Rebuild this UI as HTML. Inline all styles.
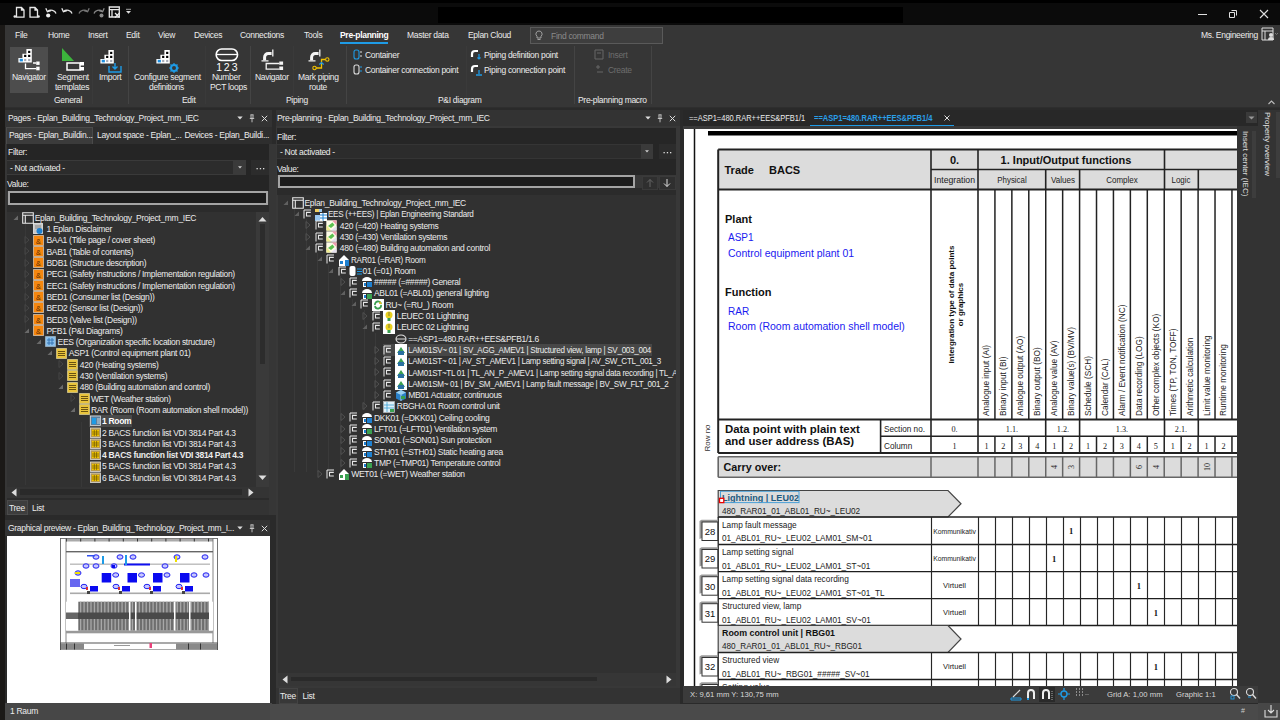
<!DOCTYPE html><html><head><meta charset="utf-8"><style>
*{margin:0;padding:0;box-sizing:border-box}
html,body{width:1280px;height:720px;overflow:hidden;background:#2f2f2f;font-family:"Liberation Sans",sans-serif}
.a{position:absolute}
.t{white-space:pre;line-height:1.2}
</style></head><body>
<div class="a" style="left:0px;top:0px;width:1280px;height:25px;background:#0b0b0b;"></div>
<div class="a" style="left:0px;top:0px;width:1280px;height:3px;background:#000000;"></div>
<div class="a" style="left:438px;top:7px;width:465px;height:16px;background:#000000;"></div>
<div class="a" style="left:0px;top:25px;width:5px;height:695px;background:#1b1917;"></div>
<div class="a" style="left:5px;top:25px;width:1275px;height:83px;background:#363636;"></div>
<div class="a" style="left:5px;top:106.6px;width:1275px;height:1.6px;background:#2e2e2e;"></div>
<div class="a" style="left:5px;top:108.2px;width:1275px;height:2px;background:#3c3c3c;"></div>
<div class="a" style="left:5px;top:108px;width:1275px;height:612px;background:#2a2a2a;"></div>
<svg class="a" style="left:13px;top:5px;" width="14" height="14" viewBox="0 0 14 14"><path d="M3.5 2.5h5l2.5 2.5v7.2H3.5z M8.5 2.5v2.5h2.5" fill="none" stroke="#e8e8e8" stroke-width="1.3"/><path d="M1.5 11.5h2" fill="none" stroke="#e8e8e8" stroke-width="1.3"/><circle cx="1.8" cy="11.5" r="1.3" fill="#e8e8e8"/></svg>
<svg class="a" style="left:28px;top:5px;" width="14" height="14" viewBox="0 0 14 14"><path d="M2 2.5h5l2.5 2.5v7.2H2z M7 2.5v2.5h2.5" fill="none" stroke="#e8e8e8" stroke-width="1.3"/><circle cx="10.5" cy="11.5" r="1.3" fill="#e8e8e8"/></svg>
<svg class="a" style="left:44px;top:5px;" width="14" height="14" viewBox="0 0 14 14"><path d="M3.5 6.5a5 4.2 0 0 1 8.5 2" fill="none" stroke="#e8e8e8" stroke-width="1.3"/><path d="M1.8 3.2l1.6 3.6 3.6-1.2" fill="none" stroke="#e8e8e8" stroke-width="1.3"/><circle cx="4.2" cy="10.5" r="2.1" fill="#f2f2f2"/></svg>
<svg class="a" style="left:60px;top:5px;" width="14" height="14" viewBox="0 0 14 14"><path d="M3.5 6.5a5 4.2 0 0 1 8.5 2" fill="none" stroke="#e8e8e8" stroke-width="1.3"/><path d="M1.8 3.2l1.6 3.6 3.6-1.2" fill="none" stroke="#e8e8e8" stroke-width="1.3"/></svg>
<svg class="a" style="left:77px;top:5px;" width="14" height="14" viewBox="0 0 14 14"><path d="M10.5 6.5a5 4.2 0 0 0-8.5 2" fill="none" stroke="#777" stroke-width="1.3"/><path d="M12.2 3.2l-1.6 3.6-3.6-1.2" fill="none" stroke="#777" stroke-width="1.3"/></svg>
<svg class="a" style="left:92px;top:5px;" width="14" height="14" viewBox="0 0 14 14"><path d="M10.5 6.5a5 4.2 0 0 0-8.5 2" fill="none" stroke="#888" stroke-width="1.3"/><path d="M12.2 3.2l-1.6 3.6-3.6-1.2" fill="none" stroke="#888" stroke-width="1.3"/><circle cx="9.5" cy="10.5" r="2" fill="#8a8a8a"/></svg>
<svg class="a" style="left:108px;top:5px;" width="14" height="14" viewBox="0 0 14 14"><path d="M1.3 2h10v10H1.3z M1.3 4.6h10 M4 4.6v7.4" fill="none" stroke="#e8e8e8" stroke-width="1.3"/><path d="M7 8l4.5 4.5 M11.5 8L7 12.5" fill="none" stroke="#e8e8e8" stroke-width="1.3"/></svg>
<svg class="a" style="left:125px;top:8px;" width="7" height="7" viewBox="0 0 7 7"><path d="M1 1.3h5" stroke="#ccc" stroke-width="0.8"/><path d="M1 3h5l-2.5 2.8z" fill="#ddd"/></svg>
<div class="a" style="left:1198px;top:14px;width:9px;height:1px;background:#e0e0e0;"></div>
<svg class="a" style="left:1228px;top:9px;" width="10" height="10" viewBox="0 0 10 10"><path d="M1.5 3.5h5v5h-5z M3.5 1.5h5v5" fill="none" stroke="#e0e0e0" stroke-width="1"/></svg>
<svg class="a" style="left:1259px;top:9px;" width="10" height="10" viewBox="0 0 10 10"><path d="M1 1l8 8 M9 1l-8 8" stroke="#e0e0e0" stroke-width="1.1"/></svg>
<div class="a t" style="left:15px;top:30.32px;font-size:8.5px;letter-spacing:-0.3px;color:#ececec;">File</div>
<div class="a t" style="left:48px;top:30.32px;font-size:8.5px;letter-spacing:-0.3px;color:#ececec;">Home</div>
<div class="a t" style="left:88px;top:30.32px;font-size:8.5px;letter-spacing:-0.3px;color:#ececec;">Insert</div>
<div class="a t" style="left:126px;top:30.32px;font-size:8.5px;letter-spacing:-0.3px;color:#ececec;">Edit</div>
<div class="a t" style="left:158px;top:30.32px;font-size:8.5px;letter-spacing:-0.3px;color:#ececec;">View</div>
<div class="a t" style="left:194px;top:30.32px;font-size:8.5px;letter-spacing:-0.3px;color:#ececec;">Devices</div>
<div class="a t" style="left:240px;top:30.32px;font-size:8.5px;letter-spacing:-0.3px;color:#ececec;">Connections</div>
<div class="a t" style="left:304px;top:30.32px;font-size:8.5px;letter-spacing:-0.3px;color:#ececec;">Tools</div>
<div class="a t" style="left:407px;top:30.32px;font-size:8.5px;letter-spacing:-0.3px;color:#ececec;">Master data</div>
<div class="a t" style="left:468px;top:30.32px;font-size:8.5px;letter-spacing:-0.3px;color:#ececec;">Eplan Cloud</div>
<div class="a t" style="left:340px;top:30.32px;font-size:8.5px;letter-spacing:-0.3px;color:#ffffff;"><b>Pre-planning</b></div>
<div class="a" style="left:340px;top:42px;width:48px;height:2px;background:#1e9be6;"></div>
<div class="a" style="left:530px;top:27px;width:133px;height:17px;background:#3e3e3e;border:1px solid #5a5a5a;"></div>
<svg class="a" style="left:534px;top:29px;" width="10" height="13" viewBox="0 0 10 13"><path d="M5 2a3 3 0 0 1 2 5.3V9H3V7.3A3 3 0 0 1 5 2z M3.5 10.5h3" fill="none" stroke="#aaa" stroke-width="0.9"/></svg>
<div class="a t" style="left:551px;top:30.82px;font-size:8.5px;letter-spacing:-0.3px;color:#8a8a8a;">Find command</div>
<div class="a t" style="left:1201px;top:30.32px;font-size:8.5px;letter-spacing:-0.3px;color:#ececec;">Ms. Engineering</div>
<svg class="a" style="left:1261px;top:27px;" width="18" height="15" viewBox="0 0 18 15"><path d="M1 1h11v12H1z M1 4h11 M4 4v9" fill="none" stroke="#ddd" stroke-width="1"/><circle cx="10" cy="8" r="2" fill="#ddd"/><path d="M7 13a3 3 0 0 1 6 0z" fill="#ddd"/><path d="M14 6l1.5 1.5L17 6" fill="none" stroke="#888" stroke-width="0.8"/></svg>
<div class="a" style="left:10px;top:47px;width:38px;height:46px;background:#4d4d4d;"></div>
<svg class="a" style="left:17.6px;top:48px;" width="15" height="16" viewBox="0 0 15 16"><path d="M8.4 1H13.8V14.5H0.4V10H4.4V5.8H8.4Z" fill="#fff"/><rect x="10.1" y="2.8" width="2.2" height="2.2" fill="#000"/><rect x="6.1" y="6.8" width="2.2" height="2.2" fill="#000"/><rect x="10.1" y="6.8" width="2.2" height="2.2" fill="#000"/><rect x="1.7" y="10.8" width="3.2" height="2.6" fill="#1e8fe0"/><rect x="6.1" y="10.9" width="2.2" height="2.2" fill="#a8acb8"/><rect x="10.1" y="10.9" width="2.2" height="2.2" fill="#a8acb8"/></svg>
<svg class="a" style="left:24px;top:60px;" width="17" height="12" viewBox="0 0 17 12"><path d="M1.5 3.5V8.7H12 M9 3h3" fill="none" stroke="#fff" stroke-width="1.3"/><rect x="12.2" y="1.5" width="3.4" height="3.4" fill="#fff"/><rect x="12.2" y="6.7" width="3.4" height="3.6" fill="#fff"/></svg>
<div class="a t" style="left:12px;top:72.33px;font-size:8.5px;letter-spacing:-0.3px;color:#ececec;">Navigator</div>
<svg class="a" style="left:61px;top:47px;" width="25" height="26" viewBox="0 0 25 26"><path d="M1 1v13h12z" fill="#3cb43c"/><rect x="6" y="16" width="13" height="7" fill="none" stroke="#fff" stroke-width="1.5"/><rect x="19" y="15" width="4" height="3.5" fill="#fff"/><rect x="19" y="20" width="4" height="3.5" fill="#fff"/></svg>
<div class="a t" style="left:57px;top:72.33px;font-size:8.5px;letter-spacing:-0.3px;color:#ececec;">Segment</div>
<div class="a t" style="left:55px;top:82.33px;font-size:8.5px;letter-spacing:-0.3px;color:#ececec;">templates</div>
<svg class="a" style="left:99.6px;top:48.5px;" width="15" height="16" viewBox="0 0 15 16"><path d="M8.4 1H13.8V14.5H0.4V10H4.4V5.8H8.4Z" fill="#fff"/><rect x="10.1" y="2.8" width="2.2" height="2.2" fill="#000"/><rect x="6.1" y="6.8" width="2.2" height="2.2" fill="#000"/><rect x="10.1" y="6.8" width="2.2" height="2.2" fill="#000"/><rect x="1.7" y="10.8" width="3.2" height="2.6" fill="#1e8fe0"/><rect x="6.1" y="10.9" width="2.2" height="2.2" fill="#a8acb8"/><rect x="10.1" y="10.9" width="2.2" height="2.2" fill="#a8acb8"/></svg>
<svg class="a" style="left:108px;top:63px;" width="14" height="10" viewBox="0 0 14 10"><path d="M1 3v6h12V3 M7 0v6 M4.5 3.5L7 6l2.5-2.5" fill="none" stroke="#1e9be6" stroke-width="1.4"/></svg>
<div class="a t" style="left:99px;top:72.33px;font-size:8.5px;letter-spacing:-0.3px;color:#ececec;">Import</div>
<svg class="a" style="left:155.6px;top:48.5px;" width="15" height="16" viewBox="0 0 15 16"><path d="M8.4 1H13.8V14.5H0.4V10H4.4V5.8H8.4Z" fill="#fff"/><rect x="10.1" y="2.8" width="2.2" height="2.2" fill="#000"/><rect x="6.1" y="6.8" width="2.2" height="2.2" fill="#000"/><rect x="10.1" y="6.8" width="2.2" height="2.2" fill="#000"/><rect x="1.7" y="10.8" width="3.2" height="2.6" fill="#1e8fe0"/><rect x="6.1" y="10.9" width="2.2" height="2.2" fill="#a8acb8"/><rect x="10.1" y="10.9" width="2.2" height="2.2" fill="#a8acb8"/></svg>
<svg class="a" style="left:169px;top:63px;" width="10" height="10" viewBox="0 0 10 10"><circle cx="5" cy="5" r="3" fill="none" stroke="#1e9be6" stroke-width="2"/><path d="M5 0v2 M5 8v2 M0 5h2 M8 5h2 M1.5 1.5l1.4 1.4 M7.1 7.1l1.4 1.4 M8.5 1.5L7.1 2.9 M2.9 7.1L1.5 8.5" stroke="#1e9be6" stroke-width="1.2"/></svg>
<div class="a t" style="left:134px;top:72.33px;font-size:8.5px;letter-spacing:-0.3px;color:#ececec;">Configure segment</div>
<div class="a t" style="left:149px;top:82.33px;font-size:8.5px;letter-spacing:-0.3px;color:#ececec;">definitions</div>
<svg class="a" style="left:215px;top:48.3px;" width="24" height="14" viewBox="0 0 24 14"><rect x="1.2" y="1" width="21.3" height="11.5" rx="5.5" fill="none" stroke="#fff" stroke-width="1.6"/><path d="M1.5 6.5h20.5" stroke="#fff" stroke-width="1.3"/></svg>
<div class="a t" style="left:216.3px;top:60.82px;font-size:10.5px;color:#fff;">1</div>
<div class="a t" style="left:223.8px;top:60.82px;font-size:10.5px;color:#fff;">2</div>
<div class="a t" style="left:231.8px;top:60.82px;font-size:10.5px;color:#fff;">3</div>
<div class="a t" style="left:212px;top:72.33px;font-size:8.5px;letter-spacing:-0.3px;color:#ececec;">Number</div>
<div class="a t" style="left:210px;top:82.33px;font-size:8.5px;letter-spacing:-0.3px;color:#ececec;">PCT loops</div>
<svg class="a" style="left:261px;top:49px;" width="14" height="13" viewBox="0 0 14 13"><path d="M3.6 11.2V8.2a3.6 3.6 0 0 1 3.6-3.6H10.6" fill="none" stroke="#f4f4f4" stroke-width="3"/><path d="M0.5 11.8h7 M11.8 0.5v7" stroke="#f4f4f4" stroke-width="1.3"/></svg>
<svg class="a" style="left:264px;top:60px;" width="21" height="11" viewBox="0 0 21 11"><path d="M15.5 3.5H2.2V9.2H15.5" fill="none" stroke="#f4f4f4" stroke-width="1.3"/><rect x="15.3" y="1.5" width="3.8" height="3.3" fill="#f4f4f4"/><rect x="15.3" y="6.5" width="3.8" height="3.5" fill="#f4f4f4"/></svg>
<div class="a t" style="left:255px;top:72.33px;font-size:8.5px;letter-spacing:-0.3px;color:#ececec;">Navigator</div>
<svg class="a" style="left:308px;top:49px;" width="14" height="13" viewBox="0 0 14 13"><path d="M3.6 11.2V8.2a3.6 3.6 0 0 1 3.6-3.6H10.6" fill="none" stroke="#f4f4f4" stroke-width="3"/><path d="M0.5 11.8h7 M11.8 0.5v7" stroke="#f4f4f4" stroke-width="1.3"/></svg>
<svg class="a" style="left:311px;top:57px;" width="20" height="14" viewBox="0 0 20 14"><path d="M5 11H10.5V2.5H14.5" fill="none" stroke="#f2c200" stroke-width="1.3"/><circle cx="3.5" cy="11" r="1.7" fill="none" stroke="#f2c200" stroke-width="1.1"/><circle cx="16.3" cy="2.5" r="1.7" fill="none" stroke="#f2c200" stroke-width="1.1"/><path d="M8.3 7.6L10.5 5.6 12.7 7.6" stroke="#1e9be6" stroke-width="1.3" fill="none"/></svg>
<div class="a t" style="left:298px;top:72.33px;font-size:8.5px;letter-spacing:-0.3px;color:#ececec;">Mark piping</div>
<div class="a t" style="left:309px;top:82.33px;font-size:8.5px;letter-spacing:-0.3px;color:#ececec;">route</div>
<svg class="a" style="left:352px;top:49px;" width="11" height="11" viewBox="0 0 11 11"><rect x="2" y="1" width="5" height="9" rx="2" fill="none" stroke="#1e9be6" stroke-width="1.1"/><path d="M8 3h2 M8 7h2" stroke="#ddd" stroke-width="1.2"/></svg>
<div class="a t" style="left:365px;top:49.83px;font-size:8.5px;letter-spacing:-0.3px;color:#ececec;">Container</div>
<svg class="a" style="left:352px;top:64px;" width="11" height="11" viewBox="0 0 11 11"><rect x="2" y="1" width="5" height="9" rx="2" fill="none" stroke="#ddd" stroke-width="1.1"/><path d="M8 3h2 M8 7h2" stroke="#1e9be6" stroke-width="1.2"/></svg>
<div class="a t" style="left:365px;top:64.83px;font-size:8.5px;letter-spacing:-0.3px;color:#ececec;">Container connection point</div>
<svg class="a" style="left:470px;top:48px;" width="13" height="13" viewBox="0 0 13 13"><path d="M2 9V6a3 3 0 0 1 3-3h3" fill="none" stroke="#fff" stroke-width="2.2"/><path d="M9 6v5 M7.5 9.5L9 11l1.5-1.5" stroke="#1e9be6" stroke-width="1.2" fill="none"/></svg>
<div class="a t" style="left:484px;top:49.83px;font-size:8.5px;letter-spacing:-0.3px;color:#ececec;">Piping definition point</div>
<svg class="a" style="left:470px;top:63px;" width="13" height="13" viewBox="0 0 13 13"><path d="M2 9V6a3 3 0 0 1 3-3h3" fill="none" stroke="#fff" stroke-width="2.2"/><path d="M6 12h6 M9 7v4" stroke="#1e9be6" stroke-width="1.3" fill="none"/></svg>
<div class="a t" style="left:484px;top:64.83px;font-size:8.5px;letter-spacing:-0.3px;color:#ececec;">Piping connection point</div>
<svg class="a" style="left:594px;top:49px;" width="12" height="11" viewBox="0 0 12 11"><path d="M1 1h8v9H1z M3 4h4" fill="none" stroke="#666" stroke-width="1"/></svg>
<div class="a t" style="left:608px;top:49.83px;font-size:8.5px;letter-spacing:-0.3px;color:#6e6e6e;">Insert</div>
<svg class="a" style="left:594px;top:64px;" width="12" height="11" viewBox="0 0 12 11"><path d="M2 3h4 M4 1v4 M3 8h6" fill="none" stroke="#666" stroke-width="1"/></svg>
<div class="a t" style="left:608px;top:64.83px;font-size:8.5px;letter-spacing:-0.3px;color:#6e6e6e;">Create</div>
<div class="a" style="left:92px;top:46px;width:1px;height:58px;background:#3a3a3a;"></div>
<div class="a" style="left:128px;top:46px;width:1px;height:58px;background:#444444;"></div>
<div class="a" style="left:205px;top:46px;width:1px;height:58px;background:#3a3a3a;"></div>
<div class="a" style="left:250px;top:46px;width:1px;height:58px;background:#444444;"></div>
<div class="a" style="left:293px;top:46px;width:1px;height:58px;background:#3a3a3a;"></div>
<div class="a" style="left:346px;top:46px;width:1px;height:58px;background:#444444;"></div>
<div class="a" style="left:466px;top:46px;width:1px;height:58px;background:#3a3a3a;"></div>
<div class="a" style="left:574px;top:46px;width:1px;height:58px;background:#444444;"></div>
<div class="a" style="left:651px;top:46px;width:1px;height:58px;background:#444444;"></div>
<div class="a t" style="left:54px;top:95.33px;font-size:8.5px;letter-spacing:-0.3px;color:#ececec;">General</div>
<div class="a t" style="left:182px;top:95.33px;font-size:8.5px;letter-spacing:-0.3px;color:#ececec;">Edit</div>
<div class="a t" style="left:286px;top:95.33px;font-size:8.5px;letter-spacing:-0.3px;color:#ececec;">Piping</div>
<div class="a t" style="left:438px;top:95.33px;font-size:8.5px;letter-spacing:-0.3px;color:#ececec;">P&amp;I diagram</div>
<div class="a t" style="left:578px;top:95.33px;font-size:8.5px;letter-spacing:-0.3px;color:#ececec;">Pre-planning macro</div>
<svg class="a" style="left:1268px;top:100px;" width="7" height="5" viewBox="0 0 7 5"><path d="M0.5 4L3.5 1l3 3" fill="none" stroke="#bbb" stroke-width="1.1"/></svg>
<div class="a" style="left:5px;top:110px;width:267px;height:17px;background:#333333;"></div>
<div class="a t" style="left:8px;top:112.92px;font-size:8.5px;letter-spacing:-0.3px;color:#ececec;">Pages - Eplan_Building_Technology_Project_mm_IEC</div>
<svg class="a" style="left:237px;top:116px;" width="6" height="4" viewBox="0 0 6 4"><path d="M0.3 0.5h5.4L3 3.5z" fill="#ddd"/></svg>
<svg class="a" style="left:249px;top:113.5px;" width="6" height="9" viewBox="0 0 6 9"><path d="M1.5 0.8h3 M2 0.8v3.5h2V0.8 M0.8 4.5h4.4 M3 4.5v3.8" fill="none" stroke="#ccc" stroke-width="0.9"/></svg>
<svg class="a" style="left:261px;top:115px;" width="7" height="7" viewBox="0 0 7 7"><path d="M0.8 0.8l5.4 5.4 M6.2 0.8L0.8 6.2" stroke="#ddd" stroke-width="1"/></svg>
<div class="a" style="left:5px;top:127px;width:267px;height:17px;background:#2e2e2e;"></div>
<div class="a" style="left:6px;top:127px;width:87px;height:17px;background:#3b3b3b;border:1px solid #4a4a4a;border-bottom:none;"></div>
<div class="a t" style="left:9px;top:130.32px;font-size:8.5px;letter-spacing:-0.3px;color:#ececec;">Pages - Eplan_Buildin...</div>
<div class="a t" style="left:97px;top:130.32px;font-size:8.5px;letter-spacing:-0.3px;color:#ececec;">Layout space - Eplan_...</div>
<div class="a t" style="left:184.5px;top:130.32px;font-size:8.5px;letter-spacing:-0.3px;color:#ececec;">Devices - Eplan_Buildi...</div>
<div class="a" style="left:5px;top:144px;width:272.5px;height:371px;background:#363636;"></div>
<div class="a" style="left:7px;top:144px;width:262px;height:16px;background:#252525;"></div>
<div class="a t" style="left:8px;top:147.32px;font-size:8.5px;letter-spacing:-0.3px;color:#ececec;">Filter:</div>
<div class="a" style="left:7px;top:160px;width:239px;height:15px;background:#2c2c2c;border-top:1px solid #3a3a3a;border-bottom:1px solid #3a3a3a;"></div>
<div class="a" style="left:233px;top:160px;width:13px;height:15px;background:#3a3a3a;"></div>
<svg class="a" style="left:237.5px;top:166px;" width="4" height="3" viewBox="0 0 4 3"><path d="M0 0.3h4L2 2.6z" fill="#ccc"/></svg>
<div class="a t" style="left:10px;top:162.82px;font-size:8.5px;letter-spacing:-0.3px;color:#ececec;">- Not activated -</div>
<div class="a" style="left:246px;top:160px;width:5px;height:15px;background:#252525;"></div>
<div class="a" style="left:251px;top:160px;width:18px;height:15px;background:#2c2c2c;"></div>
<svg class="a" style="left:256px;top:167.5px;" width="9" height="2" viewBox="0 0 9 2"><rect x="0.5" y="0" width="1.3" height="1.3" fill="#ddd"/><rect x="3.8" y="0" width="1.3" height="1.3" fill="#ddd"/><rect x="7" y="0" width="1.3" height="1.3" fill="#ddd"/></svg>
<div class="a" style="left:7px;top:175px;width:262px;height:16px;background:#252525;"></div>
<div class="a t" style="left:7px;top:179.32px;font-size:8.5px;letter-spacing:-0.3px;color:#ececec;">Value:</div>
<div class="a" style="left:8px;top:191px;width:260px;height:14px;background:#a4a4a4;"></div>
<div class="a" style="left:10px;top:193px;width:256px;height:10px;background:#1c1c1c;"></div>
<div class="a" style="left:7px;top:205px;width:262px;height:7px;background:#2b2b2b;"></div>
<div class="a" style="left:7px;top:212px;width:262px;height:275px;background:#313131;"></div>
<div class="a" style="left:256px;top:212px;width:13px;height:275px;background:#3a3a3a;"></div>
<svg class="a" style="left:258px;top:216px;" width="9" height="6" viewBox="0 0 9 6"><path d="M0.5 5.5L4.5 1l4 4.5z" fill="#ddd"/></svg>
<div class="a" style="left:259.5px;top:224px;width:5.5px;height:140px;background:#2c2c2c;"></div>
<svg class="a" style="left:258px;top:475px;" width="9" height="6" viewBox="0 0 9 6"><path d="M0.5 0.5L4.5 5l4-4.5z" fill="#ddd"/></svg>
<div class="a" style="left:7px;top:487px;width:262px;height:11px;background:#343434;"></div>
<svg class="a" style="left:11px;top:488px;" width="6" height="9" viewBox="0 0 6 9"><path d="M5.5 0.5v8L0.5 4.5z" fill="#ddd"/></svg>
<div class="a" style="left:20px;top:489px;width:222px;height:6px;background:#2a2a2a;"></div>
<svg class="a" style="left:248px;top:488px;" width="6" height="9" viewBox="0 0 6 9"><path d="M0.5 0.5v8l5-4z" fill="#ddd"/></svg>
<div class="a" style="left:7px;top:498px;width:262px;height:2px;background:#2b2b2b;"></div>
<div class="a" style="left:7px;top:500px;width:262px;height:15px;background:#333333;"></div>
<div class="a" style="left:7px;top:500px;width:21px;height:15px;background:#3d3d3d;border:1px solid #4b4b4b;"></div>
<div class="a t" style="left:9px;top:502.82px;font-size:8.5px;letter-spacing:-0.3px;color:#ececec;">Tree</div>
<div class="a t" style="left:32px;top:502.82px;font-size:8.5px;letter-spacing:-0.3px;color:#ececec;">List</div>
<div class="a" style="left:5px;top:515px;width:267px;height:5px;background:#2a2a2a;"></div>
<div class="a" style="left:7px;top:212px;width:249px;height:275px;overflow:hidden">
<div class="a" style="left:18px;top:11px;width:1px;height:262px;background:#383838;"></div>
<div class="a" style="left:74px;top:210px;width:1px;height:65px;background:#383838;"></div>
<svg class="a" style="left:6.0px;top:2.5px;" width="6" height="6" viewBox="0 0 6 6"><path d="M5 0.5V5H0.5z" fill="#6a6a6a"/></svg>
<svg class="a" style="left:15.0px;top:0.0px;" width="12" height="12" viewBox="0 0 12 12"><path d="M0.7 0.7h10.6v10.6H0.7z M0.7 3.3h10.6 M3.3 3.3v8" fill="none" stroke="#e8e8e8" stroke-width="1.1"/></svg>
<div class="a t" style="left:27.700000000000003px;top:0.82px;font-size:8.5px;letter-spacing:-0.3px;color:#ececec;">Eplan_Building_Technology_Project_mm_IEC</div>
<svg class="a" style="left:26.299999999999997px;top:11.300000000000011px;" width="12" height="12" viewBox="0 0 12 12"><rect x="0.5" y="0.5" width="9" height="10" fill="#c8c8c8" stroke="#eee" stroke-width="0.8"/><path d="M2 3h6 M2 5h6" stroke="#777" stroke-width="0.8"/><circle cx="6.5" cy="8" r="3" fill="#1e80d0"/></svg>
<div class="a t" style="left:39.5px;top:12.13px;font-size:8.5px;letter-spacing:-0.3px;color:#ececec;">1 Eplan Disclaimer</div>
<svg class="a" style="left:17.299999999999997px;top:24.099999999999994px;" width="6" height="8" viewBox="0 0 6 8"><path d="M1 0.5l4 3.5-4 3.5z" fill="none" stroke="#484848" stroke-width="0.9"/></svg>
<svg class="a" style="left:26.299999999999997px;top:22.599999999999994px;" width="11" height="11" viewBox="0 0 11 11"><rect x="0.5" y="0.5" width="10" height="10" fill="#f5870f" stroke="#ffffff" stroke-width="1" stroke-dasharray="1 1"/><text x="5.5" y="8.5" font-size="7.5" text-anchor="middle" fill="#5a2a00" font-family="Liberation Sans">&amp;</text></svg>
<div class="a t" style="left:39.5px;top:23.42px;font-size:8.5px;letter-spacing:-0.3px;color:#ececec;">BAA1 (Title page / cover sheet)</div>
<svg class="a" style="left:17.299999999999997px;top:35.400000000000006px;" width="6" height="8" viewBox="0 0 6 8"><path d="M1 0.5l4 3.5-4 3.5z" fill="none" stroke="#484848" stroke-width="0.9"/></svg>
<svg class="a" style="left:26.299999999999997px;top:33.900000000000006px;" width="11" height="11" viewBox="0 0 11 11"><rect x="0.5" y="0.5" width="10" height="10" fill="#f5870f" stroke="#ffffff" stroke-width="1" stroke-dasharray="1 1"/><text x="5.5" y="8.5" font-size="7.5" text-anchor="middle" fill="#5a2a00" font-family="Liberation Sans">&amp;</text></svg>
<div class="a t" style="left:39.5px;top:34.73px;font-size:8.5px;letter-spacing:-0.3px;color:#ececec;">BAB1 (Table of contents)</div>
<svg class="a" style="left:17.299999999999997px;top:46.69999999999999px;" width="6" height="8" viewBox="0 0 6 8"><path d="M1 0.5l4 3.5-4 3.5z" fill="none" stroke="#484848" stroke-width="0.9"/></svg>
<svg class="a" style="left:26.299999999999997px;top:45.19999999999999px;" width="11" height="11" viewBox="0 0 11 11"><rect x="0.5" y="0.5" width="10" height="10" fill="#f5870f" stroke="#ffffff" stroke-width="1" stroke-dasharray="1 1"/><text x="5.5" y="8.5" font-size="7.5" text-anchor="middle" fill="#5a2a00" font-family="Liberation Sans">&amp;</text></svg>
<div class="a t" style="left:39.5px;top:46.02px;font-size:8.5px;letter-spacing:-0.3px;color:#ececec;">BDB1 (Structure description)</div>
<svg class="a" style="left:17.299999999999997px;top:58.0px;" width="6" height="8" viewBox="0 0 6 8"><path d="M1 0.5l4 3.5-4 3.5z" fill="none" stroke="#484848" stroke-width="0.9"/></svg>
<svg class="a" style="left:26.299999999999997px;top:56.5px;" width="11" height="11" viewBox="0 0 11 11"><rect x="0.5" y="0.5" width="10" height="10" fill="#f5870f" stroke="#ffffff" stroke-width="1" stroke-dasharray="1 1"/><text x="5.5" y="8.5" font-size="7.5" text-anchor="middle" fill="#5a2a00" font-family="Liberation Sans">&amp;</text></svg>
<div class="a t" style="left:39.5px;top:57.33px;font-size:8.5px;letter-spacing:-0.3px;color:#ececec;">PEC1 (Safety instructions / Implementation regulation)</div>
<svg class="a" style="left:17.299999999999997px;top:69.30000000000001px;" width="6" height="8" viewBox="0 0 6 8"><path d="M1 0.5l4 3.5-4 3.5z" fill="none" stroke="#484848" stroke-width="0.9"/></svg>
<svg class="a" style="left:26.299999999999997px;top:67.80000000000001px;" width="11" height="11" viewBox="0 0 11 11"><rect x="0.5" y="0.5" width="10" height="10" fill="#f5870f" stroke="#ffffff" stroke-width="1" stroke-dasharray="1 1"/><text x="5.5" y="8.5" font-size="7.5" text-anchor="middle" fill="#5a2a00" font-family="Liberation Sans">&amp;</text></svg>
<div class="a t" style="left:39.5px;top:68.63px;font-size:8.5px;letter-spacing:-0.3px;color:#ececec;">EEC1 (Safety instructions / Implementation regulation)</div>
<svg class="a" style="left:17.299999999999997px;top:80.60000000000002px;" width="6" height="8" viewBox="0 0 6 8"><path d="M1 0.5l4 3.5-4 3.5z" fill="none" stroke="#484848" stroke-width="0.9"/></svg>
<svg class="a" style="left:26.299999999999997px;top:79.10000000000002px;" width="11" height="11" viewBox="0 0 11 11"><rect x="0.5" y="0.5" width="10" height="10" fill="#f5870f" stroke="#ffffff" stroke-width="1" stroke-dasharray="1 1"/><text x="5.5" y="8.5" font-size="7.5" text-anchor="middle" fill="#5a2a00" font-family="Liberation Sans">&amp;</text></svg>
<div class="a t" style="left:39.5px;top:79.93px;font-size:8.5px;letter-spacing:-0.3px;color:#ececec;">BED1 (Consumer list (Design))</div>
<svg class="a" style="left:17.299999999999997px;top:91.89999999999998px;" width="6" height="8" viewBox="0 0 6 8"><path d="M1 0.5l4 3.5-4 3.5z" fill="none" stroke="#484848" stroke-width="0.9"/></svg>
<svg class="a" style="left:26.299999999999997px;top:90.39999999999998px;" width="11" height="11" viewBox="0 0 11 11"><rect x="0.5" y="0.5" width="10" height="10" fill="#f5870f" stroke="#ffffff" stroke-width="1" stroke-dasharray="1 1"/><text x="5.5" y="8.5" font-size="7.5" text-anchor="middle" fill="#5a2a00" font-family="Liberation Sans">&amp;</text></svg>
<div class="a t" style="left:39.5px;top:91.22px;font-size:8.5px;letter-spacing:-0.3px;color:#ececec;">BED2 (Sensor list (Design))</div>
<svg class="a" style="left:17.299999999999997px;top:103.19999999999999px;" width="6" height="8" viewBox="0 0 6 8"><path d="M1 0.5l4 3.5-4 3.5z" fill="none" stroke="#484848" stroke-width="0.9"/></svg>
<svg class="a" style="left:26.299999999999997px;top:101.69999999999999px;" width="11" height="11" viewBox="0 0 11 11"><rect x="0.5" y="0.5" width="10" height="10" fill="#f5870f" stroke="#ffffff" stroke-width="1" stroke-dasharray="1 1"/><text x="5.5" y="8.5" font-size="7.5" text-anchor="middle" fill="#5a2a00" font-family="Liberation Sans">&amp;</text></svg>
<div class="a t" style="left:39.5px;top:102.52px;font-size:8.5px;letter-spacing:-0.3px;color:#ececec;">BED3 (Valve list (Design))</div>
<svg class="a" style="left:17.299999999999997px;top:115.5px;" width="6" height="6" viewBox="0 0 6 6"><path d="M5 0.5V5H0.5z" fill="#6a6a6a"/></svg>
<svg class="a" style="left:26.299999999999997px;top:113.0px;" width="11" height="11" viewBox="0 0 11 11"><rect x="0.5" y="0.5" width="10" height="10" fill="#f5870f" stroke="#ffffff" stroke-width="1" stroke-dasharray="1 1"/><text x="5.5" y="8.5" font-size="7.5" text-anchor="middle" fill="#5a2a00" font-family="Liberation Sans">&amp;</text></svg>
<div class="a t" style="left:39.5px;top:113.83px;font-size:8.5px;letter-spacing:-0.3px;color:#ececec;">PFB1 (P&amp;I Diagrams)</div>
<svg class="a" style="left:28.6px;top:126.80000000000001px;" width="6" height="6" viewBox="0 0 6 6"><path d="M5 0.5V5H0.5z" fill="#6a6a6a"/></svg>
<svg class="a" style="left:37.6px;top:124.30000000000001px;" width="11" height="11" viewBox="0 0 11 11"><rect x="0.5" y="0.5" width="10" height="10" fill="#8cc0ea" stroke="#d8ecfa" stroke-width="0.8" stroke-dasharray="1 1"/><path d="M2 4h7 M2 7h7 M4 2v7 M7 2v7" stroke="#3070b0" stroke-width="0.9"/></svg>
<div class="a t" style="left:50.6px;top:125.13px;font-size:8.5px;letter-spacing:-0.3px;color:#ececec;">EES (Organization specific location structure)</div>
<svg class="a" style="left:39.900000000000006px;top:138.10000000000002px;" width="6" height="6" viewBox="0 0 6 6"><path d="M5 0.5V5H0.5z" fill="#6a6a6a"/></svg>
<svg class="a" style="left:48.900000000000006px;top:135.60000000000002px;" width="11" height="11" viewBox="0 0 11 11"><rect x="0.5" y="0.5" width="10" height="10" fill="#e9c43c" stroke="#fff6c0" stroke-width="1" stroke-dasharray="1 1"/><path d="M2 3.5h7 M2 5.5h7 M2 7.5h7" stroke="#6b5310" stroke-width="1"/></svg>
<div class="a t" style="left:61.7px;top:136.43px;font-size:8.5px;letter-spacing:-0.3px;color:#ececec;">ASP1 (Control equipment plant 01)</div>
<svg class="a" style="left:51.2px;top:148.39999999999998px;" width="6" height="8" viewBox="0 0 6 8"><path d="M1 0.5l4 3.5-4 3.5z" fill="none" stroke="#484848" stroke-width="0.9"/></svg>
<svg class="a" style="left:60.2px;top:146.89999999999998px;" width="11" height="11" viewBox="0 0 11 11"><rect x="0.5" y="0.5" width="10" height="10" fill="#e9c43c" stroke="#fff6c0" stroke-width="1" stroke-dasharray="1 1"/><path d="M2 3.5h7 M2 5.5h7 M2 7.5h7" stroke="#6b5310" stroke-width="1"/></svg>
<div class="a t" style="left:72.8px;top:147.72px;font-size:8.5px;letter-spacing:-0.3px;color:#ececec;">420 (Heating systems)</div>
<svg class="a" style="left:51.2px;top:159.70000000000005px;" width="6" height="8" viewBox="0 0 6 8"><path d="M1 0.5l4 3.5-4 3.5z" fill="none" stroke="#484848" stroke-width="0.9"/></svg>
<svg class="a" style="left:60.2px;top:158.20000000000005px;" width="11" height="11" viewBox="0 0 11 11"><rect x="0.5" y="0.5" width="10" height="10" fill="#e9c43c" stroke="#fff6c0" stroke-width="1" stroke-dasharray="1 1"/><path d="M2 3.5h7 M2 5.5h7 M2 7.5h7" stroke="#6b5310" stroke-width="1"/></svg>
<div class="a t" style="left:72.8px;top:159.03px;font-size:8.5px;letter-spacing:-0.3px;color:#ececec;">430 (Ventilation systems)</div>
<svg class="a" style="left:51.2px;top:172.0px;" width="6" height="6" viewBox="0 0 6 6"><path d="M5 0.5V5H0.5z" fill="#6a6a6a"/></svg>
<svg class="a" style="left:60.2px;top:169.5px;" width="11" height="11" viewBox="0 0 11 11"><rect x="0.5" y="0.5" width="10" height="10" fill="#e9c43c" stroke="#fff6c0" stroke-width="1" stroke-dasharray="1 1"/><path d="M2 3.5h7 M2 5.5h7 M2 7.5h7" stroke="#6b5310" stroke-width="1"/></svg>
<div class="a t" style="left:72.8px;top:170.32px;font-size:8.5px;letter-spacing:-0.3px;color:#ececec;">480 (Building automation and control)</div>
<svg class="a" style="left:62.5px;top:182.3px;" width="6" height="8" viewBox="0 0 6 8"><path d="M1 0.5l4 3.5-4 3.5z" fill="none" stroke="#484848" stroke-width="0.9"/></svg>
<svg class="a" style="left:71.5px;top:180.8px;" width="11" height="11" viewBox="0 0 11 11"><rect x="0.5" y="0.5" width="10" height="10" fill="#e9c43c" stroke="#fff6c0" stroke-width="1" stroke-dasharray="1 1"/><path d="M2 3.5h7 M2 5.5h7 M2 7.5h7" stroke="#6b5310" stroke-width="1"/></svg>
<div class="a t" style="left:83.9px;top:181.62px;font-size:8.5px;letter-spacing:-0.3px;color:#ececec;">WET (Weather station)</div>
<svg class="a" style="left:62.5px;top:194.60000000000002px;" width="6" height="6" viewBox="0 0 6 6"><path d="M5 0.5V5H0.5z" fill="#6a6a6a"/></svg>
<svg class="a" style="left:71.5px;top:192.10000000000002px;" width="11" height="11" viewBox="0 0 11 11"><rect x="0.5" y="0.5" width="10" height="10" fill="#e9c43c" stroke="#fff6c0" stroke-width="1" stroke-dasharray="1 1"/><path d="M2 3.5h7 M2 5.5h7 M2 7.5h7" stroke="#6b5310" stroke-width="1"/></svg>
<div class="a t" style="left:83.9px;top:192.93px;font-size:8.5px;letter-spacing:-0.3px;color:#ececec;">RAR (Room (Room automation shell model))</div>
<div class="a" style="left:81.80000000000001px;top:202.89999999999998px;width:43px;height:12px;background:#4a4a4a;"></div>
<svg class="a" style="left:82.80000000000001px;top:203.39999999999998px;" width="12" height="11" viewBox="0 0 12 11"><rect x="0.5" y="1" width="10" height="9.5" fill="#5a7fa0" stroke="#ddd" stroke-width="0.8"/><rect x="2" y="3" width="4" height="6" fill="#1e9be6"/><path d="M7 4h3 M7 6h3 M7 8h3" stroke="#eee" stroke-width="0.8"/></svg>
<div class="a t" style="left:95.0px;top:204.22px;font-size:8.5px;letter-spacing:-0.3px;color:#ffffff;"><b>1 Room</b></div>
<svg class="a" style="left:82.80000000000001px;top:214.70000000000005px;" width="12" height="11" viewBox="0 0 12 11"><rect x="0.5" y="1" width="10" height="9.5" fill="#b89a50" stroke="#ddd" stroke-width="0.8"/><rect x="2" y="3" width="7" height="6" fill="#f2c400"/><path d="M2 5h7 M2 7h7 M4.3 3v6 M6.6 3v6" stroke="#5a4a00" stroke-width="0.6"/></svg>
<div class="a t" style="left:95.0px;top:215.53px;font-size:8.5px;letter-spacing:-0.3px;color:#ececec;">2 BACS function list VDI 3814 Part 4.3</div>
<svg class="a" style="left:82.80000000000001px;top:226.0px;" width="12" height="11" viewBox="0 0 12 11"><rect x="0.5" y="1" width="10" height="9.5" fill="#b89a50" stroke="#ddd" stroke-width="0.8"/><rect x="2" y="3" width="7" height="6" fill="#f2c400"/><path d="M2 5h7 M2 7h7 M4.3 3v6 M6.6 3v6" stroke="#5a4a00" stroke-width="0.6"/></svg>
<div class="a t" style="left:95.0px;top:226.82px;font-size:8.5px;letter-spacing:-0.3px;color:#ececec;">3 BACS function list VDI 3814 Part 4.3</div>
<svg class="a" style="left:82.80000000000001px;top:237.3px;" width="12" height="11" viewBox="0 0 12 11"><rect x="0.5" y="1" width="10" height="9.5" fill="#b89a50" stroke="#ddd" stroke-width="0.8"/><rect x="2" y="3" width="7" height="6" fill="#f2c400"/><path d="M2 5h7 M2 7h7 M4.3 3v6 M6.6 3v6" stroke="#5a4a00" stroke-width="0.6"/></svg>
<div class="a t" style="left:95.0px;top:238.12px;font-size:8.5px;letter-spacing:-0.3px;color:#ececec;"><b>4 BACS function list VDI 3814 Part 4.3</b></div>
<svg class="a" style="left:82.80000000000001px;top:248.60000000000002px;" width="12" height="11" viewBox="0 0 12 11"><rect x="0.5" y="1" width="10" height="9.5" fill="#b89a50" stroke="#ddd" stroke-width="0.8"/><rect x="2" y="3" width="7" height="6" fill="#f2c400"/><path d="M2 5h7 M2 7h7 M4.3 3v6 M6.6 3v6" stroke="#5a4a00" stroke-width="0.6"/></svg>
<div class="a t" style="left:95.0px;top:249.43px;font-size:8.5px;letter-spacing:-0.3px;color:#ececec;">5 BACS function list VDI 3814 Part 4.3</div>
<svg class="a" style="left:82.80000000000001px;top:259.90000000000003px;" width="12" height="11" viewBox="0 0 12 11"><rect x="0.5" y="1" width="10" height="9.5" fill="#b89a50" stroke="#ddd" stroke-width="0.8"/><rect x="2" y="3" width="7" height="6" fill="#f2c400"/><path d="M2 5h7 M2 7h7 M4.3 3v6 M6.6 3v6" stroke="#5a4a00" stroke-width="0.6"/></svg>
<div class="a t" style="left:95.0px;top:260.73px;font-size:8.5px;letter-spacing:-0.3px;color:#ececec;">6 BACS function list VDI 3814 Part 4.3</div>
</div>
<div class="a" style="left:5px;top:520px;width:267px;height:16px;background:#333333;"></div>
<div class="a t" style="left:8px;top:523.33px;font-size:8.5px;letter-spacing:-0.3px;color:#ececec;">Graphical preview - Eplan_Building_Technology_Project_mm_I...</div>
<svg class="a" style="left:237px;top:526px;" width="6" height="4" viewBox="0 0 6 4"><path d="M0.3 0.5h5.4L3 3.5z" fill="#ddd"/></svg>
<svg class="a" style="left:249px;top:523.5px;" width="6" height="9" viewBox="0 0 6 9"><path d="M1.5 0.8h3 M2 0.8v3.5h2V0.8 M0.8 4.5h4.4 M3 4.5v3.8" fill="none" stroke="#ccc" stroke-width="0.9"/></svg>
<svg class="a" style="left:261px;top:525px;" width="7" height="7" viewBox="0 0 7 7"><path d="M0.8 0.8l5.4 5.4 M6.2 0.8L0.8 6.2" stroke="#ddd" stroke-width="1"/></svg>
<div class="a" style="left:7px;top:536px;width:263px;height:167px;background:#ffffff;"></div>
<svg class="a" style="left:60px;top:538px;" width="158" height="112" viewBox="0 0 158 112"><rect x="0.5" y="0.5" width="157" height="111" fill="#fff" stroke="#555" stroke-width="1"/><rect x="1" y="0.5" width="156" height="3" fill="#aaa" stroke="none" stroke-width="0"/><rect x="6.0" y="0.5" width="1" height="3" fill="#333" stroke="none" stroke-width="0"/><rect x="20.200000000000003" y="0.5" width="1" height="3" fill="#333" stroke="none" stroke-width="0"/><rect x="34.400000000000006" y="0.5" width="1" height="3" fill="#333" stroke="none" stroke-width="0"/><rect x="48.599999999999994" y="0.5" width="1" height="3" fill="#333" stroke="none" stroke-width="0"/><rect x="62.8" y="0.5" width="1" height="3" fill="#333" stroke="none" stroke-width="0"/><rect x="77.0" y="0.5" width="1" height="3" fill="#333" stroke="none" stroke-width="0"/><rect x="91.19999999999999" y="0.5" width="1" height="3" fill="#333" stroke="none" stroke-width="0"/><rect x="105.39999999999998" y="0.5" width="1" height="3" fill="#333" stroke="none" stroke-width="0"/><rect x="119.6" y="0.5" width="1" height="3" fill="#333" stroke="none" stroke-width="0"/><rect x="133.8" y="0.5" width="1" height="3" fill="#333" stroke="none" stroke-width="0"/><rect x="148.0" y="0.5" width="1" height="3" fill="#333" stroke="none" stroke-width="0"/><rect x="0.5" y="0.5" width="5.5" height="111" fill="#fff" stroke="#666" stroke-width="0.8"/><rect x="153" y="0.5" width="4.5" height="111" fill="#fff" stroke="#666" stroke-width="0.8"/><rect x="6" y="13" width="147" height="1.4" fill="#666" stroke="none" stroke-width="0"/><rect x="10" y="25.5" width="140" height="1.4" fill="#bbb" stroke="none" stroke-width="0"/><rect x="10" y="54.5" width="140" height="1.6" fill="#aaa" stroke="none" stroke-width="0"/><rect x="41.7" y="35" width="9.5" height="9.5" fill="#0a0af0" stroke="none" stroke-width="0"/><ellipse cx="55.7" cy="37" rx="3" ry="2.2" fill="#c8c8ff" stroke="#2020f0" stroke-width="1"/><rect x="67.5" y="35" width="9.5" height="9.5" fill="#0a0af0" stroke="none" stroke-width="0"/><ellipse cx="81.5" cy="37" rx="3" ry="2.2" fill="#c8c8ff" stroke="#2020f0" stroke-width="1"/><rect x="93" y="35" width="9.5" height="9.5" fill="#0a0af0" stroke="none" stroke-width="0"/><ellipse cx="107" cy="37" rx="3" ry="2.2" fill="#c8c8ff" stroke="#2020f0" stroke-width="1"/><rect x="120" y="35" width="9.5" height="9.5" fill="#0a0af0" stroke="none" stroke-width="0"/><ellipse cx="134" cy="37" rx="3" ry="2.2" fill="#c8c8ff" stroke="#2020f0" stroke-width="1"/><rect x="30" y="48" width="8" height="5.5" fill="#0a0af0" stroke="none" stroke-width="0"/><ellipse cx="24" cy="48.5" rx="3" ry="2.2" fill="#c8c8ff" stroke="#2020f0" stroke-width="1"/><rect x="27" y="53" width="3" height="3" fill="#444" stroke="none" stroke-width="0"/><rect x="26" y="49" width="2" height="3" fill="#e03030" stroke="none" stroke-width="0"/><rect x="62" y="48" width="8" height="5.5" fill="#0a0af0" stroke="none" stroke-width="0"/><ellipse cx="56" cy="48.5" rx="3" ry="2.2" fill="#c8c8ff" stroke="#2020f0" stroke-width="1"/><rect x="59" y="53" width="3" height="3" fill="#444" stroke="none" stroke-width="0"/><rect x="58" y="49" width="2" height="3" fill="#e03030" stroke="none" stroke-width="0"/><rect x="93" y="48" width="8" height="5.5" fill="#0a0af0" stroke="none" stroke-width="0"/><ellipse cx="87" cy="48.5" rx="3" ry="2.2" fill="#c8c8ff" stroke="#2020f0" stroke-width="1"/><rect x="90" y="53" width="3" height="3" fill="#444" stroke="none" stroke-width="0"/><rect x="89" y="49" width="2" height="3" fill="#e03030" stroke="none" stroke-width="0"/><rect x="125" y="48" width="8" height="5.5" fill="#0a0af0" stroke="none" stroke-width="0"/><ellipse cx="119" cy="48.5" rx="3" ry="2.2" fill="#c8c8ff" stroke="#2020f0" stroke-width="1"/><rect x="122" y="53" width="3" height="3" fill="#444" stroke="none" stroke-width="0"/><rect x="121" y="49" width="2" height="3" fill="#e03030" stroke="none" stroke-width="0"/><ellipse cx="36" cy="19" rx="3" ry="2.2" fill="#c8c8ff" stroke="#2020f0" stroke-width="1"/><ellipse cx="60" cy="19" rx="3" ry="2.2" fill="#c8c8ff" stroke="#2020f0" stroke-width="1"/><ellipse cx="73" cy="19" rx="3" ry="2.2" fill="#c8c8ff" stroke="#2020f0" stroke-width="1"/><ellipse cx="117" cy="19" rx="3" ry="2.2" fill="#c8c8ff" stroke="#2020f0" stroke-width="1"/><ellipse cx="145" cy="19" rx="3" ry="2.2" fill="#c8c8ff" stroke="#2020f0" stroke-width="1"/><ellipse cx="26" cy="28" rx="3" ry="2.2" fill="#c8c8ff" stroke="#2020f0" stroke-width="1"/><ellipse cx="36" cy="28" rx="3" ry="2.2" fill="#c8c8ff" stroke="#2020f0" stroke-width="1"/><ellipse cx="54" cy="28" rx="3" ry="2.2" fill="#c8c8ff" stroke="#2020f0" stroke-width="1"/><ellipse cx="105" cy="28" rx="3" ry="2.2" fill="#c8c8ff" stroke="#2020f0" stroke-width="1"/><ellipse cx="146" cy="37" rx="3" ry="2.2" fill="#c8c8ff" stroke="#2020f0" stroke-width="1"/><ellipse cx="18" cy="35" rx="3" ry="2.2" fill="#c8c8ff" stroke="#2020f0" stroke-width="1"/><rect x="64" y="25.5" width="26" height="2" fill="#1010f0" stroke="none" stroke-width="0"/><rect x="65" y="17" width="2" height="10" fill="#1e9be6" stroke="none" stroke-width="0"/><rect x="42" y="18" width="2" height="8" fill="#1e9be6" stroke="none" stroke-width="0"/><rect x="115" y="18" width="2" height="6" fill="#f0e000" stroke="none" stroke-width="0"/><rect x="15" y="34" width="5" height="2" fill="#f0e000" stroke="none" stroke-width="0"/><rect x="10" y="41" width="10" height="8" fill="#6868f0" stroke="none" stroke-width="0"/><rect x="52" y="27" width="3" height="3" fill="#0a0af0" stroke="none" stroke-width="0"/><rect x="27" y="17" width="8" height="1.5" fill="#3050f0" stroke="none" stroke-width="0"/><rect x="6" y="63.700000000000045" width="147" height="29" fill="#fff" stroke="none" stroke-width="0"/><rect x="18.299999999999997" y="63.700000000000045" width="130.7" height="29" fill="#6e6e6e" stroke="none" stroke-width="0"/><rect x="20.0" y="63.700000000000045" width="1.3" height="29" fill="#a8a8a8" stroke="none" stroke-width="0"/><rect x="23.450000000000003" y="63.700000000000045" width="1.3" height="29" fill="#a8a8a8" stroke="none" stroke-width="0"/><rect x="26.900000000000006" y="63.700000000000045" width="1.3" height="29" fill="#a8a8a8" stroke="none" stroke-width="0"/><rect x="30.349999999999994" y="63.700000000000045" width="1.3" height="29" fill="#a8a8a8" stroke="none" stroke-width="0"/><rect x="33.8" y="63.700000000000045" width="1.3" height="29" fill="#a8a8a8" stroke="none" stroke-width="0"/><rect x="37.25" y="63.700000000000045" width="1.3" height="29" fill="#a8a8a8" stroke="none" stroke-width="0"/><rect x="40.7" y="63.700000000000045" width="1.3" height="29" fill="#a8a8a8" stroke="none" stroke-width="0"/><rect x="44.150000000000006" y="63.700000000000045" width="1.3" height="29" fill="#a8a8a8" stroke="none" stroke-width="0"/><rect x="47.599999999999994" y="63.700000000000045" width="1.3" height="29" fill="#a8a8a8" stroke="none" stroke-width="0"/><rect x="51.05" y="63.700000000000045" width="1.3" height="29" fill="#a8a8a8" stroke="none" stroke-width="0"/><rect x="54.5" y="63.700000000000045" width="1.3" height="29" fill="#a8a8a8" stroke="none" stroke-width="0"/><rect x="57.95" y="63.700000000000045" width="1.3" height="29" fill="#a8a8a8" stroke="none" stroke-width="0"/><rect x="61.400000000000006" y="63.700000000000045" width="1.3" height="29" fill="#a8a8a8" stroke="none" stroke-width="0"/><rect x="64.85" y="63.700000000000045" width="1.3" height="29" fill="#a8a8a8" stroke="none" stroke-width="0"/><rect x="68.30000000000001" y="63.700000000000045" width="1.3" height="29" fill="#a8a8a8" stroke="none" stroke-width="0"/><rect x="71.75" y="63.700000000000045" width="1.3" height="29" fill="#a8a8a8" stroke="none" stroke-width="0"/><rect x="75.19999999999999" y="63.700000000000045" width="1.3" height="29" fill="#a8a8a8" stroke="none" stroke-width="0"/><rect x="78.65" y="63.700000000000045" width="1.3" height="29" fill="#a8a8a8" stroke="none" stroke-width="0"/><rect x="82.1" y="63.700000000000045" width="1.3" height="29" fill="#a8a8a8" stroke="none" stroke-width="0"/><rect x="85.55000000000001" y="63.700000000000045" width="1.3" height="29" fill="#a8a8a8" stroke="none" stroke-width="0"/><rect x="89.0" y="63.700000000000045" width="1.3" height="29" fill="#a8a8a8" stroke="none" stroke-width="0"/><rect x="92.44999999999999" y="63.700000000000045" width="1.3" height="29" fill="#a8a8a8" stroke="none" stroke-width="0"/><rect x="95.9" y="63.700000000000045" width="1.3" height="29" fill="#a8a8a8" stroke="none" stroke-width="0"/><rect x="99.35000000000002" y="63.700000000000045" width="1.3" height="29" fill="#a8a8a8" stroke="none" stroke-width="0"/><rect x="102.80000000000001" y="63.700000000000045" width="1.3" height="29" fill="#a8a8a8" stroke="none" stroke-width="0"/><rect x="106.25" y="63.700000000000045" width="1.3" height="29" fill="#a8a8a8" stroke="none" stroke-width="0"/><rect x="109.69999999999999" y="63.700000000000045" width="1.3" height="29" fill="#a8a8a8" stroke="none" stroke-width="0"/><rect x="113.15" y="63.700000000000045" width="1.3" height="29" fill="#a8a8a8" stroke="none" stroke-width="0"/><rect x="116.60000000000002" y="63.700000000000045" width="1.3" height="29" fill="#a8a8a8" stroke="none" stroke-width="0"/><rect x="120.05000000000001" y="63.700000000000045" width="1.3" height="29" fill="#a8a8a8" stroke="none" stroke-width="0"/><rect x="123.5" y="63.700000000000045" width="1.3" height="29" fill="#a8a8a8" stroke="none" stroke-width="0"/><rect x="126.94999999999999" y="63.700000000000045" width="1.3" height="29" fill="#a8a8a8" stroke="none" stroke-width="0"/><rect x="130.4" y="63.700000000000045" width="1.3" height="29" fill="#a8a8a8" stroke="none" stroke-width="0"/><rect x="133.85000000000002" y="63.700000000000045" width="1.3" height="29" fill="#a8a8a8" stroke="none" stroke-width="0"/><rect x="137.3" y="63.700000000000045" width="1.3" height="29" fill="#a8a8a8" stroke="none" stroke-width="0"/><rect x="140.75" y="63.700000000000045" width="1.3" height="29" fill="#a8a8a8" stroke="none" stroke-width="0"/><rect x="144.2" y="63.700000000000045" width="1.3" height="29" fill="#a8a8a8" stroke="none" stroke-width="0"/><rect x="147.65" y="63.700000000000045" width="1.3" height="29" fill="#a8a8a8" stroke="none" stroke-width="0"/><rect x="18" y="74.5" width="131" height="6.5" fill="#4a4a4a" stroke="none" stroke-width="0"/><rect x="6" y="74.5" width="12" height="6.5" fill="#666" stroke="none" stroke-width="0"/><rect x="69" y="63.700000000000045" width="1.5" height="29" fill="#fff" stroke="none" stroke-width="0"/><rect x="75" y="63.700000000000045" width="1.5" height="29" fill="#fff" stroke="none" stroke-width="0"/><rect x="114" y="63.700000000000045" width="1.5" height="29" fill="#fff" stroke="none" stroke-width="0"/><rect x="129" y="63.700000000000045" width="1.5" height="29" fill="#fff" stroke="none" stroke-width="0"/><rect x="6" y="92.79999999999995" width="147" height="2.5" fill="#999" stroke="none" stroke-width="0"/><rect x="0.5" y="105" width="157" height="7" fill="#fff" stroke="#555" stroke-width="1"/><rect x="1" y="105.5" width="23" height="6" fill="#888" stroke="none" stroke-width="0"/><rect x="116" y="105.5" width="41" height="6" fill="#8a8a8a" stroke="none" stroke-width="0"/><rect x="6" y="105.5" width="1" height="6" fill="#333" stroke="none" stroke-width="0"/><rect x="14" y="105.5" width="1" height="6" fill="#333" stroke="none" stroke-width="0"/><rect x="128" y="105.5" width="1" height="6" fill="#333" stroke="none" stroke-width="0"/><rect x="140" y="105.5" width="1" height="6" fill="#333" stroke="none" stroke-width="0"/><rect x="24" y="106" width="28.5" height="5" fill="#fff" stroke="none" stroke-width="0"/><rect x="54" y="106" width="16" height="5" fill="#fff" stroke="none" stroke-width="0"/><rect x="71.69999999999999" y="106" width="18" height="5" fill="#fff" stroke="none" stroke-width="0"/><rect x="93" y="106" width="23" height="5" fill="#fff" stroke="none" stroke-width="0"/><rect x="54" y="107" width="16" height="1" fill="#999" stroke="none" stroke-width="0"/><rect x="89.5" y="105" width="2.5" height="5" fill="#e8407a" stroke="none" stroke-width="0"/></svg>
<div class="a" style="left:5px;top:703px;width:267px;height:17px;background:#474747;"></div>
<div class="a t" style="left:10px;top:706.33px;font-size:8.5px;letter-spacing:-0.3px;color:#ececec;">1 Raum</div>
<div class="a" style="left:270px;top:515px;width:5.5px;height:188px;background:#2a2a2a;"></div>
<div class="a" style="left:275.5px;top:110px;width:404px;height:16px;background:#333333;"></div>
<div class="a" style="left:275.5px;top:126px;width:404px;height:562px;background:#383838;"></div>
<div class="a t" style="left:277px;top:112.92px;font-size:8.5px;letter-spacing:-0.3px;color:#ececec;">Pre-planning - Eplan_Building_Technology_Project_mm_IEC</div>
<svg class="a" style="left:644.5px;top:116px;" width="6" height="4" viewBox="0 0 6 4"><path d="M0.3 0.5h5.4L3 3.5z" fill="#ddd"/></svg>
<svg class="a" style="left:656.5px;top:113.5px;" width="6" height="9" viewBox="0 0 6 9"><path d="M1.5 0.8h3 M2 0.8v3.5h2V0.8 M0.8 4.5h4.4 M3 4.5v3.8" fill="none" stroke="#ccc" stroke-width="0.9"/></svg>
<svg class="a" style="left:668.5px;top:115px;" width="7" height="7" viewBox="0 0 7 7"><path d="M0.8 0.8l5.4 5.4 M6.2 0.8L0.8 6.2" stroke="#ddd" stroke-width="1"/></svg>
<div class="a" style="left:277px;top:128px;width:399px;height:16px;background:#262626;"></div>
<div class="a t" style="left:277px;top:131.62px;font-size:8.5px;letter-spacing:-0.3px;color:#ececec;">Filter:</div>
<div class="a" style="left:277px;top:144px;width:364px;height:15px;background:#2c2c2c;border-top:1px solid #353535;border-bottom:1px solid #353535;"></div>
<div class="a" style="left:641px;top:144px;width:12px;height:15px;background:#3a3a3a;"></div>
<svg class="a" style="left:645px;top:150px;" width="4" height="3" viewBox="0 0 4 3"><path d="M0 0.3h4L2 2.6z" fill="#ccc"/></svg>
<div class="a t" style="left:280px;top:146.82px;font-size:8.5px;letter-spacing:-0.3px;color:#ececec;">- Not activated -</div>
<div class="a" style="left:653px;top:144px;width:6px;height:15px;background:#262626;"></div>
<div class="a" style="left:659px;top:144px;width:17px;height:15px;background:#2c2c2c;"></div>
<svg class="a" style="left:663px;top:151.5px;" width="9" height="2" viewBox="0 0 9 2"><rect x="0.5" y="0" width="1.3" height="1.3" fill="#ddd"/><rect x="3.8" y="0" width="1.3" height="1.3" fill="#ddd"/><rect x="7" y="0" width="1.3" height="1.3" fill="#ddd"/></svg>
<div class="a" style="left:277px;top:159px;width:399px;height:16px;background:#262626;"></div>
<div class="a t" style="left:277px;top:163.72px;font-size:8.5px;letter-spacing:-0.3px;color:#ececec;">Value:</div>
<div class="a" style="left:278px;top:175px;width:357px;height:13px;background:#a4a4a4;"></div>
<div class="a" style="left:280px;top:177px;width:353px;height:9px;background:#1c1c1c;"></div>
<div class="a" style="left:277px;top:188px;width:399px;height:7px;background:#2b2b2b;"></div>
<div class="a" style="left:642px;top:176px;width:16px;height:14px;background:#2f2f2f;border:1px solid #3a3a3a;"></div>
<div class="a" style="left:659px;top:176px;width:17px;height:14px;background:#2f2f2f;border:1px solid #3a3a3a;"></div>
<svg class="a" style="left:646px;top:178px;" width="8" height="10" viewBox="0 0 8 10"><path d="M4 9V1.5 M1 4.5L4 1.5 7 4.5" fill="none" stroke="#666" stroke-width="1"/></svg>
<svg class="a" style="left:663px;top:178px;" width="8" height="10" viewBox="0 0 8 10"><path d="M4 1v7.5 M1 5.5L4 8.5 7 5.5" fill="none" stroke="#ddd" stroke-width="1"/></svg>
<div class="a" style="left:277.5px;top:195px;width:398px;height:478px;background:#313131;"></div>
<div class="a" style="left:277px;top:195px;width:399px;height:478px;overflow:hidden">
<div class="a" style="left:17px;top:12px;width:1px;height:265px;background:#3a3a3a;"></div>
<div class="a" style="left:29px;top:24px;width:1px;height:253px;background:#3a3a3a;"></div>
<div class="a" style="left:40px;top:58px;width:1px;height:219px;background:#3a3a3a;"></div>
<div class="a" style="left:51px;top:70px;width:1px;height:207px;background:#3a3a3a;"></div>
<div class="a" style="left:63px;top:81px;width:1px;height:196px;background:#3a3a3a;"></div>
<div class="a" style="left:75px;top:104px;width:1px;height:121px;background:#3a3a3a;"></div>
<div class="a" style="left:87px;top:115px;width:1px;height:100px;background:#3a3a3a;"></div>
<div class="a" style="left:98px;top:138px;width:1px;height:72px;background:#3a3a3a;"></div>
<svg class="a" style="left:6px;top:4.699999999999989px;" width="6" height="6" viewBox="0 0 6 6"><path d="M5 0.5V5H0.5z" fill="#606060"/></svg>
<svg class="a" style="left:15px;top:2.1999999999999886px;" width="12" height="12" viewBox="0 0 12 12"><path d="M0.7 0.7h10.6v10.6H0.7z M0.7 3.3h10.6 M3.3 3.3v8" fill="none" stroke="#e8e8e8" stroke-width="1.1"/></svg>
<div class="a t" style="left:27.5px;top:3.02px;font-size:8.5px;letter-spacing:-0.3px;color:#ececec;">Eplan_Building_Technology_Project_mm_IEC</div>
<svg class="a" style="left:26.399999999999977px;top:14.0px;" width="10" height="10" viewBox="0 0 10 10"><path d="M1 9.5V1H8" fill="none" stroke="#e8e8e8" stroke-width="1"/><path d="M7.8 3.4H3.5V7H7.8" fill="none" stroke="#e8e8e8" stroke-width="1.1"/></svg>
<svg class="a" style="left:16.899999999999977px;top:16.0px;" width="6" height="6" viewBox="0 0 6 6"><path d="M5 0.5V5H0.5z" fill="#606060"/></svg>
<svg class="a" style="left:37.89999999999998px;top:13.5px;" width="12" height="12" viewBox="0 0 12 12"><rect x="0" y="0" width="4" height="3" fill="#f2d060"/><rect x="4" y="0" width="3" height="3" fill="#9ac8f0"/><rect x="5" y="4" width="7" height="8" fill="#fff"/><path d="M5 6h7 M5 9h7 M8 4v8" stroke="#1e80d0" stroke-width="1"/><rect x="0" y="6" width="5" height="6" fill="#9ac8f0"/></svg>
<div class="a t" style="left:51.39999999999998px;top:14.32px;font-size:8.5px;letter-spacing:-0.3px;color:#ececec;transform:scaleX(0.95);transform-origin:0 0">EES (++EES) | Eplan Engineering Standard</div>
<svg class="a" style="left:37.799999999999955px;top:25.299999999999983px;" width="10" height="10" viewBox="0 0 10 10"><path d="M1 9.5V1H8" fill="none" stroke="#e8e8e8" stroke-width="1"/><path d="M7.8 3.4H3.5V7H7.8" fill="none" stroke="#e8e8e8" stroke-width="1.1"/></svg>
<svg class="a" style="left:28.299999999999955px;top:26.299999999999983px;" width="6" height="8" viewBox="0 0 6 8"><path d="M1 0.5l4 3.5-4 3.5z" fill="none" stroke="#555" stroke-width="0.9"/></svg>
<svg class="a" style="left:49.299999999999955px;top:24.799999999999983px;" width="11" height="11" viewBox="0 0 11 11"><rect x="0.3" y="0.3" width="10.4" height="10.4" fill="#fdfbe8"/><path d="M0.5 10.5V5L5 10.5z" fill="#f2ee90"/><path d="M6 0.5h4.5V5z" fill="#f09ab0"/><path d="M2 6L6.5 2.5 8.5 5 5 8z" fill="#5cc050"/><path d="M5 10.5L10.5 6v4.5z" fill="#e6e0f0"/></svg>
<div class="a t" style="left:62.799999999999955px;top:25.62px;font-size:8.5px;letter-spacing:-0.3px;color:#ececec;">420 (=420) Heating systems</div>
<svg class="a" style="left:37.799999999999955px;top:36.599999999999994px;" width="10" height="10" viewBox="0 0 10 10"><path d="M1 9.5V1H8" fill="none" stroke="#e8e8e8" stroke-width="1"/><path d="M7.8 3.4H3.5V7H7.8" fill="none" stroke="#e8e8e8" stroke-width="1.1"/></svg>
<svg class="a" style="left:28.299999999999955px;top:37.599999999999994px;" width="6" height="8" viewBox="0 0 6 8"><path d="M1 0.5l4 3.5-4 3.5z" fill="none" stroke="#555" stroke-width="0.9"/></svg>
<svg class="a" style="left:49.299999999999955px;top:36.099999999999994px;" width="11" height="11" viewBox="0 0 11 11"><rect x="0.3" y="0.3" width="10.4" height="10.4" fill="#fdfbe8"/><path d="M0.5 10.5V5L5 10.5z" fill="#f2ee90"/><path d="M6 0.5h4.5V5z" fill="#f09ab0"/><path d="M2 6L6.5 2.5 8.5 5 5 8z" fill="#5cc050"/><path d="M5 10.5L10.5 6v4.5z" fill="#e6e0f0"/></svg>
<div class="a t" style="left:62.799999999999955px;top:36.92px;font-size:8.5px;letter-spacing:-0.3px;color:#ececec;">430 (=430) Ventilation systems</div>
<svg class="a" style="left:37.799999999999955px;top:47.89999999999998px;" width="10" height="10" viewBox="0 0 10 10"><path d="M1 9.5V1H8" fill="none" stroke="#e8e8e8" stroke-width="1"/><path d="M7.8 3.4H3.5V7H7.8" fill="none" stroke="#e8e8e8" stroke-width="1.1"/></svg>
<svg class="a" style="left:28.299999999999955px;top:49.89999999999998px;" width="6" height="6" viewBox="0 0 6 6"><path d="M5 0.5V5H0.5z" fill="#606060"/></svg>
<svg class="a" style="left:49.299999999999955px;top:47.39999999999998px;" width="11" height="11" viewBox="0 0 11 11"><rect x="0.3" y="0.3" width="10.4" height="10.4" fill="#fdfbe8"/><path d="M0.5 10.5V5L5 10.5z" fill="#f2ee90"/><path d="M6 0.5h4.5V5z" fill="#f09ab0"/><path d="M2 6L6.5 2.5 8.5 5 5 8z" fill="#5cc050"/><path d="M5 10.5L10.5 6v4.5z" fill="#e6e0f0"/></svg>
<div class="a t" style="left:62.799999999999955px;top:48.22px;font-size:8.5px;letter-spacing:-0.3px;color:#ececec;">480 (=480) Building automation and control</div>
<svg class="a" style="left:49.19999999999999px;top:59.19999999999999px;" width="10" height="10" viewBox="0 0 10 10"><path d="M1 9.5V1H8" fill="none" stroke="#e8e8e8" stroke-width="1"/><path d="M7.8 3.4H3.5V7H7.8" fill="none" stroke="#e8e8e8" stroke-width="1.1"/></svg>
<svg class="a" style="left:39.69999999999999px;top:61.19999999999999px;" width="6" height="6" viewBox="0 0 6 6"><path d="M5 0.5V5H0.5z" fill="#606060"/></svg>
<svg class="a" style="left:60.69999999999999px;top:58.69999999999999px;" width="12" height="12" viewBox="0 0 12 12"><path d="M1 6l5-5 5 5v6H1z" fill="#fff"/><rect x="7" y="6" width="4" height="6" fill="#1e80d0"/><rect x="2" y="7" width="3" height="3" fill="#1e80d0"/></svg>
<div class="a t" style="left:74.19999999999999px;top:59.52px;font-size:8.5px;letter-spacing:-0.3px;color:#ececec;transform:scaleX(0.95);transform-origin:0 0">RAR01 (=RAR) Room</div>
<svg class="a" style="left:60.599999999999966px;top:70.5px;" width="10" height="10" viewBox="0 0 10 10"><path d="M1 9.5V1H8" fill="none" stroke="#e8e8e8" stroke-width="1"/><path d="M7.8 3.4H3.5V7H7.8" fill="none" stroke="#e8e8e8" stroke-width="1.1"/></svg>
<svg class="a" style="left:51.099999999999966px;top:72.5px;" width="6" height="6" viewBox="0 0 6 6"><path d="M5 0.5V5H0.5z" fill="#606060"/></svg>
<svg class="a" style="left:72.09999999999997px;top:70.0px;" width="14" height="12" viewBox="0 0 14 12"><rect x="0.5" y="1" width="6" height="10" rx="2" fill="#fff"/><path d="M8 4h5 M8 6.5h5 M8 9h5" stroke="#1e9be6" stroke-width="1.1"/></svg>
<div class="a t" style="left:85.59999999999997px;top:70.83px;font-size:8.5px;letter-spacing:-0.3px;color:#ececec;">01 (=01) Room</div>
<svg class="a" style="left:72.0px;top:81.80000000000001px;" width="10" height="10" viewBox="0 0 10 10"><path d="M1 9.5V1H8" fill="none" stroke="#e8e8e8" stroke-width="1"/><path d="M7.8 3.4H3.5V7H7.8" fill="none" stroke="#e8e8e8" stroke-width="1.1"/></svg>
<svg class="a" style="left:62.5px;top:82.80000000000001px;" width="6" height="8" viewBox="0 0 6 8"><path d="M1 0.5l4 3.5-4 3.5z" fill="none" stroke="#555" stroke-width="0.9"/></svg>
<svg class="a" style="left:83.5px;top:81.30000000000001px;" width="12" height="12" viewBox="0 0 12 12"><path d="M1 5a5 4 0 0 1 10 0z" fill="#fff"/><rect x="2" y="6" width="3" height="5" fill="#fff"/><rect x="6" y="6" width="5" height="5" fill="#1e80d0"/><rect x="3" y="7" width="2" height="3" fill="#1e80d0"/></svg>
<div class="a t" style="left:97.0px;top:82.13px;font-size:8.5px;letter-spacing:-0.3px;color:#ececec;">##### (=#####) General</div>
<svg class="a" style="left:72.0px;top:93.10000000000002px;" width="10" height="10" viewBox="0 0 10 10"><path d="M1 9.5V1H8" fill="none" stroke="#e8e8e8" stroke-width="1"/><path d="M7.8 3.4H3.5V7H7.8" fill="none" stroke="#e8e8e8" stroke-width="1.1"/></svg>
<svg class="a" style="left:62.5px;top:95.10000000000002px;" width="6" height="6" viewBox="0 0 6 6"><path d="M5 0.5V5H0.5z" fill="#606060"/></svg>
<svg class="a" style="left:83.5px;top:92.60000000000002px;" width="12" height="12" viewBox="0 0 12 12"><path d="M1 5a5 4 0 0 1 10 0z" fill="#fff"/><rect x="2" y="6" width="3" height="5" fill="#fff"/><rect x="6" y="6" width="5" height="5" fill="#3aa050"/><rect x="3" y="7" width="2" height="3" fill="#1e80d0"/></svg>
<div class="a t" style="left:97.0px;top:93.43px;font-size:8.5px;letter-spacing:-0.3px;color:#ececec;">ABL01 (=ABL01) general lighting</div>
<svg class="a" style="left:83.39999999999998px;top:104.39999999999998px;" width="10" height="10" viewBox="0 0 10 10"><path d="M1 9.5V1H8" fill="none" stroke="#e8e8e8" stroke-width="1"/><path d="M7.8 3.4H3.5V7H7.8" fill="none" stroke="#e8e8e8" stroke-width="1.1"/></svg>
<svg class="a" style="left:73.89999999999998px;top:106.39999999999998px;" width="6" height="6" viewBox="0 0 6 6"><path d="M5 0.5V5H0.5z" fill="#606060"/></svg>
<svg class="a" style="left:94.89999999999998px;top:103.89999999999998px;" width="12" height="12" viewBox="0 0 12 12"><rect x="0" y="0" width="12" height="12" fill="#fff"/><path d="M3 6a3 3 0 0 1 6-1 M9 6a3 3 0 0 1-6 1" fill="none" stroke="#3aa050" stroke-width="1.8"/><path d="M8 2l2 3-3 0z" fill="#e8c020"/></svg>
<div class="a t" style="left:108.39999999999998px;top:104.72px;font-size:8.5px;letter-spacing:-0.3px;color:#ececec;">RU~ (=RU_) Room</div>
<svg class="a" style="left:94.79999999999995px;top:115.69999999999999px;" width="10" height="10" viewBox="0 0 10 10"><path d="M1 9.5V1H8" fill="none" stroke="#e8e8e8" stroke-width="1"/><path d="M7.8 3.4H3.5V7H7.8" fill="none" stroke="#e8e8e8" stroke-width="1.1"/></svg>
<svg class="a" style="left:85.29999999999995px;top:116.69999999999999px;" width="6" height="8" viewBox="0 0 6 8"><path d="M1 0.5l4 3.5-4 3.5z" fill="none" stroke="#555" stroke-width="0.9"/></svg>
<svg class="a" style="left:106.29999999999995px;top:115.19999999999999px;" width="12" height="12" viewBox="0 0 12 12"><rect x="0" y="0" width="12" height="12" fill="#fff"/><circle cx="6" cy="5" r="3.5" fill="#e8d020"/><rect x="4.5" y="8" width="3" height="3" fill="#3aa050"/><path d="M6 2v4" stroke="#444" stroke-width="0.6"/></svg>
<div class="a t" style="left:119.79999999999995px;top:116.02px;font-size:8.5px;letter-spacing:-0.3px;color:#ececec;">LEUEC 01 Lightning</div>
<svg class="a" style="left:94.79999999999995px;top:127.0px;" width="10" height="10" viewBox="0 0 10 10"><path d="M1 9.5V1H8" fill="none" stroke="#e8e8e8" stroke-width="1"/><path d="M7.8 3.4H3.5V7H7.8" fill="none" stroke="#e8e8e8" stroke-width="1.1"/></svg>
<svg class="a" style="left:85.29999999999995px;top:129.0px;" width="6" height="6" viewBox="0 0 6 6"><path d="M5 0.5V5H0.5z" fill="#606060"/></svg>
<svg class="a" style="left:106.29999999999995px;top:126.5px;" width="12" height="12" viewBox="0 0 12 12"><rect x="0" y="0" width="12" height="12" fill="#fff"/><circle cx="6" cy="5" r="3.5" fill="#e8d020"/><rect x="4.5" y="8" width="3" height="3" fill="#3aa050"/><path d="M6 2v4" stroke="#444" stroke-width="0.6"/></svg>
<div class="a t" style="left:119.79999999999995px;top:127.33px;font-size:8.5px;letter-spacing:-0.3px;color:#ececec;">LEUEC 02 Lightning</div>
<svg class="a" style="left:117.69999999999999px;top:137.8px;" width="12" height="12" viewBox="0 0 12 12"><ellipse cx="6" cy="6" rx="5" ry="4" fill="none" stroke="#ddd" stroke-width="1.1"/><path d="M1 6h10" stroke="#ddd" stroke-width="1"/></svg>
<div class="a t" style="left:131.2px;top:138.62px;font-size:8.5px;letter-spacing:-0.3px;color:#ececec;">==ASP1=480.RAR++EES&amp;PFB1/1.6</div>
<div class="a" style="left:106px;top:148.60000000000002px;width:269px;height:12px;background:#474747;"></div>
<svg class="a" style="left:106.19999999999999px;top:149.60000000000002px;" width="10" height="10" viewBox="0 0 10 10"><path d="M1 9.5V1H8" fill="none" stroke="#e8e8e8" stroke-width="1"/><path d="M7.8 3.4H3.5V7H7.8" fill="none" stroke="#e8e8e8" stroke-width="1.1"/></svg>
<svg class="a" style="left:96.69999999999999px;top:150.60000000000002px;" width="6" height="8" viewBox="0 0 6 8"><path d="M1 0.5l4 3.5-4 3.5z" fill="none" stroke="#555" stroke-width="0.9"/></svg>
<svg class="a" style="left:117.69999999999999px;top:149.10000000000002px;" width="12" height="12" viewBox="0 0 12 12"><rect x="0" y="0" width="12" height="12" fill="#fff"/><path d="M2 9l4-6 4 6z" fill="#3aa050"/><rect x="3" y="7" width="6" height="4" fill="#2a70a0"/></svg>
<div class="a t" style="left:131.2px;top:149.93px;font-size:8.5px;letter-spacing:-0.3px;color:#ececec;transform:scaleX(0.95);transform-origin:0 0">LAM01SV~ 01 | SV_AGG_AMEV1 | Structured view, lamp | SV_003_004</div>
<svg class="a" style="left:106.19999999999999px;top:160.89999999999998px;" width="10" height="10" viewBox="0 0 10 10"><path d="M1 9.5V1H8" fill="none" stroke="#e8e8e8" stroke-width="1"/><path d="M7.8 3.4H3.5V7H7.8" fill="none" stroke="#e8e8e8" stroke-width="1.1"/></svg>
<svg class="a" style="left:96.69999999999999px;top:161.89999999999998px;" width="6" height="8" viewBox="0 0 6 8"><path d="M1 0.5l4 3.5-4 3.5z" fill="none" stroke="#555" stroke-width="0.9"/></svg>
<svg class="a" style="left:117.69999999999999px;top:160.39999999999998px;" width="12" height="12" viewBox="0 0 12 12"><rect x="0" y="0" width="12" height="12" fill="#fff"/><path d="M2 9l4-6 4 6z" fill="#3aa050"/><rect x="3" y="7" width="6" height="4" fill="#2a70a0"/></svg>
<div class="a t" style="left:131.2px;top:161.22px;font-size:8.5px;letter-spacing:-0.3px;color:#ececec;transform:scaleX(0.95);transform-origin:0 0">LAM01ST~ 01 | AV_ST_AMEV1 | Lamp setting signal | AV_SW_CTL_001_3</div>
<svg class="a" style="left:106.19999999999999px;top:172.2px;" width="10" height="10" viewBox="0 0 10 10"><path d="M1 9.5V1H8" fill="none" stroke="#e8e8e8" stroke-width="1"/><path d="M7.8 3.4H3.5V7H7.8" fill="none" stroke="#e8e8e8" stroke-width="1.1"/></svg>
<svg class="a" style="left:96.69999999999999px;top:173.2px;" width="6" height="8" viewBox="0 0 6 8"><path d="M1 0.5l4 3.5-4 3.5z" fill="none" stroke="#555" stroke-width="0.9"/></svg>
<svg class="a" style="left:117.69999999999999px;top:171.7px;" width="12" height="12" viewBox="0 0 12 12"><rect x="0" y="0" width="12" height="12" fill="#fff"/><path d="M2 9l4-6 4 6z" fill="#3aa050"/><rect x="3" y="7" width="6" height="4" fill="#2a70a0"/></svg>
<div class="a t" style="left:131.2px;top:172.52px;font-size:8.5px;letter-spacing:-0.3px;color:#ececec;transform:scaleX(0.95);transform-origin:0 0">LAM01ST~TL 01 | TL_AN_P_AMEV1 | Lamp setting signal data recording | TL_AN_P_MOD_001_1</div>
<svg class="a" style="left:106.19999999999999px;top:183.5px;" width="10" height="10" viewBox="0 0 10 10"><path d="M1 9.5V1H8" fill="none" stroke="#e8e8e8" stroke-width="1"/><path d="M7.8 3.4H3.5V7H7.8" fill="none" stroke="#e8e8e8" stroke-width="1.1"/></svg>
<svg class="a" style="left:96.69999999999999px;top:184.5px;" width="6" height="8" viewBox="0 0 6 8"><path d="M1 0.5l4 3.5-4 3.5z" fill="none" stroke="#555" stroke-width="0.9"/></svg>
<svg class="a" style="left:117.69999999999999px;top:183.0px;" width="12" height="12" viewBox="0 0 12 12"><rect x="0" y="0" width="12" height="12" fill="#fff"/><path d="M2 9l4-6 4 6z" fill="#3aa050"/><rect x="3" y="7" width="6" height="4" fill="#2a70a0"/></svg>
<div class="a t" style="left:131.2px;top:183.82px;font-size:8.5px;letter-spacing:-0.3px;color:#ececec;transform:scaleX(0.95);transform-origin:0 0">LAM01SM~ 01 | BV_SM_AMEV1 | Lamp fault message | BV_SW_FLT_001_2</div>
<svg class="a" style="left:106.19999999999999px;top:194.8px;" width="10" height="10" viewBox="0 0 10 10"><path d="M1 9.5V1H8" fill="none" stroke="#e8e8e8" stroke-width="1"/><path d="M7.8 3.4H3.5V7H7.8" fill="none" stroke="#e8e8e8" stroke-width="1.1"/></svg>
<svg class="a" style="left:96.69999999999999px;top:195.8px;" width="6" height="8" viewBox="0 0 6 8"><path d="M1 0.5l4 3.5-4 3.5z" fill="none" stroke="#555" stroke-width="0.9"/></svg>
<svg class="a" style="left:117.69999999999999px;top:194.3px;" width="12" height="12" viewBox="0 0 12 12"><path d="M6 1l5 2.5v6L6 12 1 9.5v-6z" fill="#2a80c8"/><path d="M6 1l5 2.5L6 6 1 3.5z" fill="#9ad0f0"/><path d="M6 6v6" stroke="#fff" stroke-width="0.6"/><rect x="6" y="7" width="4" height="3" fill="#3aa050"/></svg>
<div class="a t" style="left:131.2px;top:195.12px;font-size:8.5px;letter-spacing:-0.3px;color:#ececec;">MB01 Actuator, continuous</div>
<svg class="a" style="left:94.79999999999995px;top:206.10000000000002px;" width="10" height="10" viewBox="0 0 10 10"><path d="M1 9.5V1H8" fill="none" stroke="#e8e8e8" stroke-width="1"/><path d="M7.8 3.4H3.5V7H7.8" fill="none" stroke="#e8e8e8" stroke-width="1.1"/></svg>
<svg class="a" style="left:85.29999999999995px;top:207.10000000000002px;" width="6" height="8" viewBox="0 0 6 8"><path d="M1 0.5l4 3.5-4 3.5z" fill="none" stroke="#555" stroke-width="0.9"/></svg>
<svg class="a" style="left:106.29999999999995px;top:205.60000000000002px;" width="12" height="12" viewBox="0 0 12 12"><rect x="0.5" y="0.5" width="11" height="11" fill="#dff0f8" stroke="#bbb" stroke-width="0.6"/><path d="M1 4h10 M1 7h10 M4 1v10" stroke="#3aa0d0" stroke-width="0.8"/><rect x="7" y="8" width="4" height="3" fill="#3aa050"/></svg>
<div class="a t" style="left:119.79999999999995px;top:206.43px;font-size:8.5px;letter-spacing:-0.3px;color:#ececec;">RBGHA 01 Room control unit</div>
<svg class="a" style="left:72.0px;top:217.39999999999998px;" width="10" height="10" viewBox="0 0 10 10"><path d="M1 9.5V1H8" fill="none" stroke="#e8e8e8" stroke-width="1"/><path d="M7.8 3.4H3.5V7H7.8" fill="none" stroke="#e8e8e8" stroke-width="1.1"/></svg>
<svg class="a" style="left:62.5px;top:218.39999999999998px;" width="6" height="8" viewBox="0 0 6 8"><path d="M1 0.5l4 3.5-4 3.5z" fill="none" stroke="#555" stroke-width="0.9"/></svg>
<svg class="a" style="left:83.5px;top:216.89999999999998px;" width="12" height="12" viewBox="0 0 12 12"><path d="M1 5a5 4 0 0 1 10 0z" fill="#fff"/><rect x="2" y="6" width="3" height="5" fill="#fff"/><rect x="6" y="6" width="5" height="5" fill="#1e80d0"/><rect x="3" y="7" width="2" height="3" fill="#1e80d0"/></svg>
<div class="a t" style="left:97.0px;top:217.72px;font-size:8.5px;letter-spacing:-0.3px;color:#ececec;">DKK01 (=DKK01) Ceiling cooling</div>
<svg class="a" style="left:72.0px;top:228.7px;" width="10" height="10" viewBox="0 0 10 10"><path d="M1 9.5V1H8" fill="none" stroke="#e8e8e8" stroke-width="1"/><path d="M7.8 3.4H3.5V7H7.8" fill="none" stroke="#e8e8e8" stroke-width="1.1"/></svg>
<svg class="a" style="left:62.5px;top:229.7px;" width="6" height="8" viewBox="0 0 6 8"><path d="M1 0.5l4 3.5-4 3.5z" fill="none" stroke="#555" stroke-width="0.9"/></svg>
<svg class="a" style="left:83.5px;top:228.2px;" width="12" height="12" viewBox="0 0 12 12"><path d="M1 5a5 4 0 0 1 10 0z" fill="#fff"/><rect x="2" y="6" width="3" height="5" fill="#fff"/><rect x="6" y="6" width="5" height="5" fill="#3aa050"/><rect x="3" y="7" width="2" height="3" fill="#1e80d0"/></svg>
<div class="a t" style="left:97.0px;top:229.02px;font-size:8.5px;letter-spacing:-0.3px;color:#ececec;">LFT01 (=LFT01) Ventilation system</div>
<svg class="a" style="left:72.0px;top:240.0px;" width="10" height="10" viewBox="0 0 10 10"><path d="M1 9.5V1H8" fill="none" stroke="#e8e8e8" stroke-width="1"/><path d="M7.8 3.4H3.5V7H7.8" fill="none" stroke="#e8e8e8" stroke-width="1.1"/></svg>
<svg class="a" style="left:62.5px;top:241.0px;" width="6" height="8" viewBox="0 0 6 8"><path d="M1 0.5l4 3.5-4 3.5z" fill="none" stroke="#555" stroke-width="0.9"/></svg>
<svg class="a" style="left:83.5px;top:239.5px;" width="12" height="12" viewBox="0 0 12 12"><path d="M1 5a5 4 0 0 1 10 0z" fill="#fff"/><rect x="2" y="6" width="3" height="5" fill="#fff"/><rect x="6" y="6" width="5" height="5" fill="#1e80d0"/><rect x="3" y="7" width="2" height="3" fill="#1e80d0"/></svg>
<div class="a t" style="left:97.0px;top:240.32px;font-size:8.5px;letter-spacing:-0.3px;color:#ececec;">SON01 (=SON01) Sun protection</div>
<svg class="a" style="left:72.0px;top:251.3px;" width="10" height="10" viewBox="0 0 10 10"><path d="M1 9.5V1H8" fill="none" stroke="#e8e8e8" stroke-width="1"/><path d="M7.8 3.4H3.5V7H7.8" fill="none" stroke="#e8e8e8" stroke-width="1.1"/></svg>
<svg class="a" style="left:62.5px;top:252.3px;" width="6" height="8" viewBox="0 0 6 8"><path d="M1 0.5l4 3.5-4 3.5z" fill="none" stroke="#555" stroke-width="0.9"/></svg>
<svg class="a" style="left:83.5px;top:250.8px;" width="12" height="12" viewBox="0 0 12 12"><path d="M1 5a5 4 0 0 1 10 0z" fill="#fff"/><rect x="2" y="6" width="3" height="5" fill="#fff"/><rect x="6" y="6" width="5" height="5" fill="#1e80d0"/><rect x="3" y="7" width="2" height="3" fill="#1e80d0"/></svg>
<div class="a t" style="left:97.0px;top:251.62px;font-size:8.5px;letter-spacing:-0.3px;color:#ececec;">STH01 (=STH01) Static heating area</div>
<svg class="a" style="left:72.0px;top:262.6px;" width="10" height="10" viewBox="0 0 10 10"><path d="M1 9.5V1H8" fill="none" stroke="#e8e8e8" stroke-width="1"/><path d="M7.8 3.4H3.5V7H7.8" fill="none" stroke="#e8e8e8" stroke-width="1.1"/></svg>
<svg class="a" style="left:62.5px;top:263.6px;" width="6" height="8" viewBox="0 0 6 8"><path d="M1 0.5l4 3.5-4 3.5z" fill="none" stroke="#555" stroke-width="0.9"/></svg>
<svg class="a" style="left:83.5px;top:262.1px;" width="12" height="12" viewBox="0 0 12 12"><path d="M1 5a5 4 0 0 1 10 0z" fill="#fff"/><rect x="2" y="6" width="3" height="5" fill="#fff"/><rect x="6" y="6" width="5" height="5" fill="#3aa050"/><rect x="3" y="7" width="2" height="3" fill="#1e80d0"/></svg>
<div class="a t" style="left:97.0px;top:262.93px;font-size:8.5px;letter-spacing:-0.3px;color:#ececec;">TMP (=TMP01) Temperature control</div>
<svg class="a" style="left:49.19999999999999px;top:273.90000000000003px;" width="10" height="10" viewBox="0 0 10 10"><path d="M1 9.5V1H8" fill="none" stroke="#e8e8e8" stroke-width="1"/><path d="M7.8 3.4H3.5V7H7.8" fill="none" stroke="#e8e8e8" stroke-width="1.1"/></svg>
<svg class="a" style="left:39.69999999999999px;top:274.90000000000003px;" width="6" height="8" viewBox="0 0 6 8"><path d="M1 0.5l4 3.5-4 3.5z" fill="none" stroke="#555" stroke-width="0.9"/></svg>
<svg class="a" style="left:60.69999999999999px;top:273.40000000000003px;" width="12" height="12" viewBox="0 0 12 12"><path d="M1 6l5-5 5 5v6H1z" fill="#fff"/><rect x="7" y="6" width="4" height="6" fill="#3aa050"/><rect x="2" y="7" width="3" height="3" fill="#3aa050"/></svg>
<div class="a t" style="left:74.19999999999999px;top:274.23px;font-size:8.5px;letter-spacing:-0.3px;color:#ececec;">WET01 (=WET) Weather station</div>
</div>
<div class="a" style="left:277.5px;top:673px;width:398px;height:13px;background:#363636;"></div>
<svg class="a" style="left:282px;top:675px;" width="6" height="9" viewBox="0 0 6 9"><path d="M5.5 0.5v8L0.5 4.5z" fill="#ddd"/></svg>
<div class="a" style="left:291px;top:676.7px;width:306px;height:4.3px;background:#2a2a2a;"></div>
<svg class="a" style="left:666px;top:675px;" width="6" height="9" viewBox="0 0 6 9"><path d="M0.5 0.5v8l5-4z" fill="#ddd"/></svg>
<div class="a" style="left:275.5px;top:687.5px;width:404px;height:16px;background:#333333;"></div>
<div class="a" style="left:279px;top:687.5px;width:18.5px;height:16px;background:#383838;border:1px solid #434343;"></div>
<div class="a t" style="left:280px;top:690.62px;font-size:8.5px;letter-spacing:-0.3px;color:#ececec;">Tree</div>
<div class="a t" style="left:302.5px;top:690.62px;font-size:8.5px;letter-spacing:-0.3px;color:#ececec;">List</div>
<div class="a" style="left:679.5px;top:110px;width:3.5px;height:593px;background:#2a2a2a;"></div>
<div class="a" style="left:270px;top:703.7px;width:1010px;height:17px;background:#4a4a4a;"></div>
<div class="a" style="left:683px;top:110px;width:575px;height:16px;background:#282828;"></div>
<div class="a t" style="left:689px;top:112.77px;font-size:8.6px;color:#ececec;transform:scaleX(0.87);transform-origin:0 0">==ASP1=480.RAR++EES&amp;PFB1/1</div>
<div class="a t" style="left:814px;top:112.77px;font-size:8.6px;color:#2a9fe8;transform:scaleX(0.875);transform-origin:0 0"><b>==ASP1=480.RAR++EES&amp;PFB1/4</b></div>
<svg class="a" style="left:944px;top:114.5px;" width="6" height="6" viewBox="0 0 6 6"><path d="M0.5 0.5l5 5 M5.5 0.5l-5 5" stroke="#ddd" stroke-width="1"/></svg>
<div class="a" style="left:810px;top:124.5px;width:144px;height:2px;background:#1e9be6;"></div>
<div class="a" style="left:1246px;top:112px;width:11px;height:11px;background:#3a3a3a;"></div>
<svg class="a" style="left:1248px;top:116px;" width="7" height="4" viewBox="0 0 7 4"><path d="M0.5 0.5h6L3.5 3.5z" fill="#999"/></svg>
<div class="a" style="left:683px;top:126px;width:555px;height:4px;background:#3a3a3a;"></div>
<div class="a" style="left:684px;top:129px;width:553px;height:557px;background:#ffffff;"></div>
<svg class="a" style="left:684px;top:129px" width="553" height="557" viewBox="0 0 553 557"><rect x="24" y="2" width="532" height="4.5" fill="#000" stroke="none" stroke-width="0"/><path d="M10.5 0L10.5 557" stroke="#111" stroke-width="1.5"/><rect x="34.200000000000045" y="20.5" width="521.8" height="40" fill="#dcdcdc" stroke="none" stroke-width="0"/><path d="M34.200000000000045 20.5L556 20.5" stroke="#222" stroke-width="2"/><path d="M247 40.5L556 40.5" stroke="#222" stroke-width="1.6"/><path d="M34.200000000000045 60.5L556 60.5" stroke="#222" stroke-width="2"/><path d="M34.200000000000045 20.5L34.200000000000045 324" stroke="#222" stroke-width="2"/><path d="M247 20.5L247 324" stroke="#222" stroke-width="1.6"/><path d="M294 20.5L294 324" stroke="#222" stroke-width="1.6"/><path d="M480.5 20.5L480.5 60.5" stroke="#222" stroke-width="1.6"/><path d="M361.70000000000005 40.5L361.70000000000005 60.5" stroke="#222" stroke-width="1.6"/><path d="M395.5999999999999 40.5L395.5999999999999 60.5" stroke="#222" stroke-width="1.6"/><path d="M514.3 40.5L514.3 60.5" stroke="#222" stroke-width="1.6"/><path d="M310.92999999999995 60.5L310.92999999999995 290.5" stroke="#222" stroke-width="1.5"/><path d="M310.92999999999995 307.2L310.92999999999995 324" stroke="#222" stroke-width="1.5"/><path d="M327.86 60.5L327.86 290.5" stroke="#222" stroke-width="1.5"/><path d="M327.86 307.2L327.86 324" stroke="#222" stroke-width="1.5"/><path d="M344.78999999999996 60.5L344.78999999999996 290.5" stroke="#222" stroke-width="1.5"/><path d="M344.78999999999996 307.2L344.78999999999996 324" stroke="#222" stroke-width="1.5"/><path d="M361.72 60.5L361.72 290.5" stroke="#222" stroke-width="1.5"/><path d="M361.72 307.2L361.72 324" stroke="#222" stroke-width="1.5"/><path d="M378.6500000000001 60.5L378.6500000000001 290.5" stroke="#222" stroke-width="1.5"/><path d="M378.6500000000001 307.2L378.6500000000001 324" stroke="#222" stroke-width="1.5"/><path d="M395.5799999999999 60.5L395.5799999999999 290.5" stroke="#222" stroke-width="1.5"/><path d="M395.5799999999999 307.2L395.5799999999999 324" stroke="#222" stroke-width="1.5"/><path d="M412.51 60.5L412.51 290.5" stroke="#222" stroke-width="1.5"/><path d="M412.51 307.2L412.51 324" stroke="#222" stroke-width="1.5"/><path d="M429.44000000000005 60.5L429.44000000000005 290.5" stroke="#222" stroke-width="1.5"/><path d="M429.44000000000005 307.2L429.44000000000005 324" stroke="#222" stroke-width="1.5"/><path d="M446.3699999999999 60.5L446.3699999999999 290.5" stroke="#222" stroke-width="1.5"/><path d="M446.3699999999999 307.2L446.3699999999999 324" stroke="#222" stroke-width="1.5"/><path d="M463.29999999999995 60.5L463.29999999999995 290.5" stroke="#222" stroke-width="1.5"/><path d="M463.29999999999995 307.2L463.29999999999995 324" stroke="#222" stroke-width="1.5"/><path d="M480.23 60.5L480.23 290.5" stroke="#222" stroke-width="1.5"/><path d="M480.23 307.2L480.23 324" stroke="#222" stroke-width="1.5"/><path d="M497.1600000000001 60.5L497.1600000000001 290.5" stroke="#222" stroke-width="1.5"/><path d="M497.1600000000001 307.2L497.1600000000001 324" stroke="#222" stroke-width="1.5"/><path d="M514.0899999999999 60.5L514.0899999999999 290.5" stroke="#222" stroke-width="1.5"/><path d="M514.0899999999999 307.2L514.0899999999999 324" stroke="#222" stroke-width="1.5"/><path d="M531.02 60.5L531.02 290.5" stroke="#222" stroke-width="1.5"/><path d="M531.02 307.2L531.02 324" stroke="#222" stroke-width="1.5"/><path d="M547.95 60.5L547.95 290.5" stroke="#222" stroke-width="1.5"/><path d="M547.95 307.2L547.95 324" stroke="#222" stroke-width="1.5"/><text x="40.5" y="45" font-size="11" fill="#111" font-weight="bold" text-anchor="start" font-family="Liberation Sans">Trade</text><text x="85" y="45" font-size="11" fill="#111" font-weight="bold" text-anchor="start" font-family="Liberation Sans">BACS</text><text x="270.5" y="35" font-size="11" fill="#111" font-weight="bold" text-anchor="middle" font-family="Liberation Sans">0.</text><text x="382" y="35" font-size="11" fill="#111" font-weight="bold" text-anchor="middle" font-family="Liberation Sans">1. Input/Output functions</text><text x="270.5" y="54" font-size="9" fill="#222" font-weight="normal" text-anchor="middle" font-family="Liberation Sans" textLength="41" lengthAdjust="spacingAndGlyphs">Integration</text><text x="328" y="54" font-size="9" fill="#222" font-weight="normal" text-anchor="middle" font-family="Liberation Sans" textLength="29.5" lengthAdjust="spacingAndGlyphs">Physical</text><text x="379" y="54" font-size="9" fill="#222" font-weight="normal" text-anchor="middle" font-family="Liberation Sans" textLength="24" lengthAdjust="spacingAndGlyphs">Values</text><text x="438" y="54" font-size="9" fill="#222" font-weight="normal" text-anchor="middle" font-family="Liberation Sans" textLength="31.5" lengthAdjust="spacingAndGlyphs">Complex</text><text x="497" y="54" font-size="9" fill="#222" font-weight="normal" text-anchor="middle" font-family="Liberation Sans" textLength="19" lengthAdjust="spacingAndGlyphs">Logic</text><text x="41" y="93.5" font-size="11" fill="#111" font-weight="bold" text-anchor="start" font-family="Liberation Sans">Plant</text><text x="44" y="112" font-size="10" fill="#1a1af0" font-weight="normal" text-anchor="start" font-family="Liberation Sans">ASP1</text><text x="44" y="127.5" font-size="10.5" fill="#1a1af0" font-weight="normal" text-anchor="start" font-family="Liberation Sans">Control equipment plant 01</text><text x="41" y="167" font-size="11" fill="#111" font-weight="bold" text-anchor="start" font-family="Liberation Sans">Function</text><text x="44" y="185.5" font-size="10" fill="#1a1af0" font-weight="normal" text-anchor="start" font-family="Liberation Sans">RAR</text><text x="44" y="201" font-size="10.5" fill="#1a1af0" font-weight="normal" text-anchor="start" font-family="Liberation Sans">Room (Room automation shell model)</text><text x="269.5" y="175.5" font-size="8" fill="#111" font-weight="bold" text-anchor="middle" font-family="Liberation Sans" transform="rotate(-90 269.5 175.5)">Intergration type of data points</text><text x="279.29999999999995" y="175.5" font-size="8" fill="#111" font-weight="bold" text-anchor="middle" font-family="Liberation Sans" transform="rotate(-90 279.29999999999995 175.5)">or graphics</text><text x="305.46500000000003" y="287" font-size="8.3" fill="#222" font-weight="normal" text-anchor="start" font-family="Liberation Sans" transform="rotate(-90 305.46500000000003 287)">Analogue input (AI)</text><text x="322.395" y="287" font-size="8.3" fill="#222" font-weight="normal" text-anchor="start" font-family="Liberation Sans" transform="rotate(-90 322.395 287)">Binary input (BI)</text><text x="339.32500000000005" y="287" font-size="8.3" fill="#222" font-weight="normal" text-anchor="start" font-family="Liberation Sans" transform="rotate(-90 339.32500000000005 287)">Analogue output (AO)</text><text x="356.2550000000001" y="287" font-size="8.3" fill="#222" font-weight="normal" text-anchor="start" font-family="Liberation Sans" transform="rotate(-90 356.2550000000001 287)">Binary output (BO)</text><text x="373.18499999999995" y="287" font-size="8.3" fill="#222" font-weight="normal" text-anchor="start" font-family="Liberation Sans" transform="rotate(-90 373.18499999999995 287)">Analogue value (AV)</text><text x="390.115" y="287" font-size="8.3" fill="#222" font-weight="normal" text-anchor="start" font-family="Liberation Sans" transform="rotate(-90 390.115 287)">Binary value(s) (BV/MV)</text><text x="407.0450000000001" y="287" font-size="8.3" fill="#222" font-weight="normal" text-anchor="start" font-family="Liberation Sans" transform="rotate(-90 407.0450000000001 287)">Schedule (SCH)</text><text x="423.9749999999999" y="287" font-size="8.3" fill="#222" font-weight="normal" text-anchor="start" font-family="Liberation Sans" transform="rotate(-90 423.9749999999999 287)">Calendar (CAL)</text><text x="440.905" y="287" font-size="8.3" fill="#222" font-weight="normal" text-anchor="start" font-family="Liberation Sans" transform="rotate(-90 440.905 287)">Alarm / Event notification (NC)</text><text x="457.83500000000004" y="287" font-size="8.3" fill="#222" font-weight="normal" text-anchor="start" font-family="Liberation Sans" transform="rotate(-90 457.83500000000004 287)">Data recording (LOG)</text><text x="474.7649999999999" y="287" font-size="8.3" fill="#222" font-weight="normal" text-anchor="start" font-family="Liberation Sans" transform="rotate(-90 474.7649999999999 287)">Other complex objects (KO)</text><text x="491.69499999999994" y="287" font-size="8.3" fill="#222" font-weight="normal" text-anchor="start" font-family="Liberation Sans" transform="rotate(-90 491.69499999999994 287)">Times (TP, TON, TOFF)</text><text x="508.625" y="287" font-size="8.3" fill="#222" font-weight="normal" text-anchor="start" font-family="Liberation Sans" transform="rotate(-90 508.625 287)">Arithmetic calculation</text><text x="525.5550000000001" y="287" font-size="8.3" fill="#222" font-weight="normal" text-anchor="start" font-family="Liberation Sans" transform="rotate(-90 525.5550000000001 287)">Limit value monitoring</text><text x="542.4849999999999" y="287" font-size="8.3" fill="#222" font-weight="normal" text-anchor="start" font-family="Liberation Sans" transform="rotate(-90 542.4849999999999 287)">Runtime monitoring</text><path d="M34.200000000000045 290.5L556 290.5" stroke="#222" stroke-width="2"/><path d="M196.60000000000002 307.2L556 307.2" stroke="#222" stroke-width="1.6"/><path d="M34.200000000000045 324L556 324" stroke="#222" stroke-width="2"/><path d="M196.60000000000002 290.5L196.60000000000002 324" stroke="#222" stroke-width="1.6"/><path d="M361.70000000000005 290.5L361.70000000000005 307.2" stroke="#222" stroke-width="1.6"/><path d="M395.5999999999999 290.5L395.5999999999999 307.2" stroke="#222" stroke-width="1.6"/><path d="M480.5 290.5L480.5 307.2" stroke="#222" stroke-width="1.6"/><path d="M514.3 290.5L514.3 307.2" stroke="#222" stroke-width="1.6"/><text x="26" y="309" font-size="8" fill="#333" font-weight="normal" text-anchor="middle" font-family="Liberation Sans" transform="rotate(-90 26 309)">Row no</text><text x="41" y="304" font-size="11.4" fill="#111" font-weight="bold" text-anchor="start" font-family="Liberation Sans">Data point with plain text</text><text x="41" y="316" font-size="11.4" fill="#111" font-weight="bold" text-anchor="start" font-family="Liberation Sans">and user address (BAS)</text><text x="200" y="302.5" font-size="8.2" fill="#222" font-weight="normal" text-anchor="start" font-family="Liberation Sans">Section no.</text><text x="200" y="319.5" font-size="8.2" fill="#222" font-weight="normal" text-anchor="start" font-family="Liberation Sans">Column</text><text x="270.5" y="302.5" font-size="8.2" fill="#222" font-weight="normal" text-anchor="middle" font-family="Liberation Serif">0.</text><text x="270.5" y="319.5" font-size="8.2" fill="#222" font-weight="normal" text-anchor="middle" font-family="Liberation Serif">1</text><text x="328" y="302.5" font-size="8.2" fill="#222" font-weight="normal" text-anchor="middle" font-family="Liberation Serif">1.1.</text><text x="379" y="302.5" font-size="8.2" fill="#222" font-weight="normal" text-anchor="middle" font-family="Liberation Serif">1.2.</text><text x="438" y="302.5" font-size="8.2" fill="#222" font-weight="normal" text-anchor="middle" font-family="Liberation Serif">1.3.</text><text x="497" y="302.5" font-size="8.2" fill="#222" font-weight="normal" text-anchor="middle" font-family="Liberation Serif">2.1.</text><text x="302.46500000000003" y="319.5" font-size="8.2" fill="#222" font-weight="normal" text-anchor="middle" font-family="Liberation Serif">1</text><text x="319.395" y="319.5" font-size="8.2" fill="#222" font-weight="normal" text-anchor="middle" font-family="Liberation Serif">2</text><text x="336.32500000000005" y="319.5" font-size="8.2" fill="#222" font-weight="normal" text-anchor="middle" font-family="Liberation Serif">3</text><text x="353.2550000000001" y="319.5" font-size="8.2" fill="#222" font-weight="normal" text-anchor="middle" font-family="Liberation Serif">4</text><text x="370.18499999999995" y="319.5" font-size="8.2" fill="#222" font-weight="normal" text-anchor="middle" font-family="Liberation Serif">1</text><text x="387.115" y="319.5" font-size="8.2" fill="#222" font-weight="normal" text-anchor="middle" font-family="Liberation Serif">2</text><text x="404.0450000000001" y="319.5" font-size="8.2" fill="#222" font-weight="normal" text-anchor="middle" font-family="Liberation Serif">1</text><text x="420.9749999999999" y="319.5" font-size="8.2" fill="#222" font-weight="normal" text-anchor="middle" font-family="Liberation Serif">2</text><text x="437.905" y="319.5" font-size="8.2" fill="#222" font-weight="normal" text-anchor="middle" font-family="Liberation Serif">3</text><text x="454.83500000000004" y="319.5" font-size="8.2" fill="#222" font-weight="normal" text-anchor="middle" font-family="Liberation Serif">4</text><text x="471.7649999999999" y="319.5" font-size="8.2" fill="#222" font-weight="normal" text-anchor="middle" font-family="Liberation Serif">5</text><text x="488.69499999999994" y="319.5" font-size="8.2" fill="#222" font-weight="normal" text-anchor="middle" font-family="Liberation Serif">1</text><text x="505.625" y="319.5" font-size="8.2" fill="#222" font-weight="normal" text-anchor="middle" font-family="Liberation Serif">2</text><text x="522.5550000000001" y="319.5" font-size="8.2" fill="#222" font-weight="normal" text-anchor="middle" font-family="Liberation Serif">1</text><text x="539.4849999999999" y="319.5" font-size="8.2" fill="#222" font-weight="normal" text-anchor="middle" font-family="Liberation Serif">2</text><rect x="34.200000000000045" y="327.8" width="521.8" height="20.5" fill="#dcdcdc" stroke="none" stroke-width="0"/><path d="M34.200000000000045 327.8L556 327.8" stroke="#666" stroke-width="1.6"/><path d="M34.200000000000045 348.3L556 348.3" stroke="#666" stroke-width="1.6"/><path d="M34.200000000000045 327.8L34.200000000000045 348.3" stroke="#666" stroke-width="1.6"/><path d="M247 327.8L247 348.3" stroke="#666" stroke-width="1.5"/><path d="M294 327.8L294 348.3" stroke="#666" stroke-width="1.5"/><path d="M310.92999999999995 327.8L310.92999999999995 348.3" stroke="#666" stroke-width="1.5"/><path d="M327.86 327.8L327.86 348.3" stroke="#666" stroke-width="1.5"/><path d="M344.78999999999996 327.8L344.78999999999996 348.3" stroke="#666" stroke-width="1.5"/><path d="M361.72 327.8L361.72 348.3" stroke="#666" stroke-width="1.5"/><path d="M378.6500000000001 327.8L378.6500000000001 348.3" stroke="#666" stroke-width="1.5"/><path d="M395.5799999999999 327.8L395.5799999999999 348.3" stroke="#666" stroke-width="1.5"/><path d="M412.51 327.8L412.51 348.3" stroke="#666" stroke-width="1.5"/><path d="M429.44000000000005 327.8L429.44000000000005 348.3" stroke="#666" stroke-width="1.5"/><path d="M446.3699999999999 327.8L446.3699999999999 348.3" stroke="#666" stroke-width="1.5"/><path d="M463.29999999999995 327.8L463.29999999999995 348.3" stroke="#666" stroke-width="1.5"/><path d="M480.23 327.8L480.23 348.3" stroke="#666" stroke-width="1.5"/><path d="M497.1600000000001 327.8L497.1600000000001 348.3" stroke="#666" stroke-width="1.5"/><path d="M514.0899999999999 327.8L514.0899999999999 348.3" stroke="#666" stroke-width="1.5"/><path d="M531.02 327.8L531.02 348.3" stroke="#666" stroke-width="1.5"/><path d="M547.95 327.8L547.95 348.3" stroke="#666" stroke-width="1.5"/><text x="39.5" y="342" font-size="10.8" fill="#111" font-weight="bold" text-anchor="start" font-family="Liberation Sans">Carry over:</text><text x="373.18499999999995" y="338" font-size="8" fill="#222" font-weight="normal" text-anchor="middle" font-family="Liberation Serif" transform="rotate(-90 373.18499999999995 338)">4</text><text x="390.115" y="338" font-size="8" fill="#222" font-weight="normal" text-anchor="middle" font-family="Liberation Serif" transform="rotate(-90 390.115 338)">3</text><text x="457.83500000000004" y="338" font-size="8" fill="#222" font-weight="normal" text-anchor="middle" font-family="Liberation Serif" transform="rotate(-90 457.83500000000004 338)">6</text><text x="474.7649999999999" y="338" font-size="8" fill="#222" font-weight="normal" text-anchor="middle" font-family="Liberation Serif" transform="rotate(-90 474.7649999999999 338)">4</text><text x="525.5550000000001" y="338" font-size="8" fill="#222" font-weight="normal" text-anchor="middle" font-family="Liberation Serif" transform="rotate(-90 525.5550000000001 338)">10</text><path d="M34.200000000000045 361.5H264L277 374.75L264 388H34.200000000000045z" fill="#dcdcdc" stroke="#444" stroke-width="1.2"/><text x="38" y="371.8" font-size="8.8" fill="#1d5a80" font-weight="bold" text-anchor="start" font-family="Liberation Sans" textLength="77" lengthAdjust="spacingAndGlyphs">Lightning | LEU02</text><text x="38" y="384.5" font-size="8.2" fill="#222" font-weight="normal" text-anchor="start" font-family="Liberation Sans">480_RAR01_01_ABL01_RU~_LEU02</text><path d="M34.200000000000045 388L556 388" stroke="#222" stroke-width="1.6"/><path d="M34.200000000000045 415.5L556 415.5" stroke="#1e1e1e" stroke-width="1.3"/><path d="M34.200000000000045 388L34.200000000000045 415.5" stroke="#1e1e1e" stroke-width="1.3"/><path d="M247.5 388L247.5 415.5" stroke="#262626" stroke-width="1.15"/><path d="M294.5 388L294.5 415.5" stroke="#262626" stroke-width="1.15"/><path d="M311.5 388L311.5 415.5" stroke="#262626" stroke-width="1.15"/><path d="M328.5 388L328.5 415.5" stroke="#262626" stroke-width="1.15"/><path d="M345.5 388L345.5 415.5" stroke="#262626" stroke-width="1.15"/><path d="M362.5 388L362.5 415.5" stroke="#262626" stroke-width="1.15"/><path d="M379.5 388L379.5 415.5" stroke="#262626" stroke-width="1.15"/><path d="M396.5 388L396.5 415.5" stroke="#262626" stroke-width="1.15"/><path d="M413.5 388L413.5 415.5" stroke="#262626" stroke-width="1.15"/><path d="M429.5 388L429.5 415.5" stroke="#262626" stroke-width="1.15"/><path d="M446.5 388L446.5 415.5" stroke="#262626" stroke-width="1.15"/><path d="M463.5 388L463.5 415.5" stroke="#262626" stroke-width="1.15"/><path d="M480.5 388L480.5 415.5" stroke="#262626" stroke-width="1.15"/><path d="M497.5 388L497.5 415.5" stroke="#262626" stroke-width="1.15"/><path d="M514.5 388L514.5 415.5" stroke="#262626" stroke-width="1.15"/><path d="M531.5 388L531.5 415.5" stroke="#262626" stroke-width="1.15"/><path d="M548.5 388L548.5 415.5" stroke="#262626" stroke-width="1.15"/><path d="M15.5 392L17.5 390.70000000000005H33.5V393H18V409L15.5 410z" fill="#9a9a9a"/><rect x="18" y="393" width="15.8" height="18.5" fill="#fff" stroke="#333" stroke-width="1"/><text x="26" y="405.79999999999995" font-size="9.5" fill="#111" font-weight="normal" text-anchor="middle" font-family="Liberation Sans">28</text><text x="38" y="398.5" font-size="8.3" fill="#222" font-weight="normal" text-anchor="start" font-family="Liberation Sans">Lamp fault message</text><text x="38" y="412" font-size="8.2" fill="#222" font-weight="normal" text-anchor="start" font-family="Liberation Sans">01_ABL01_RU~_LEU02_LAM01_SM~01</text><text x="270.5" y="404.5" font-size="6.8" fill="#222" font-weight="normal" text-anchor="middle" font-family="Liberation Sans">Kommunikativ</text><text x="387.115" y="405" font-size="8.5" fill="#111" font-weight="bold" text-anchor="middle" font-family="Liberation Serif">1</text><path d="M34.200000000000045 442.70000000000005L556 442.70000000000005" stroke="#1e1e1e" stroke-width="1.3"/><path d="M34.200000000000045 415.5L34.200000000000045 442.70000000000005" stroke="#1e1e1e" stroke-width="1.3"/><path d="M247.5 415.5L247.5 442.70000000000005" stroke="#262626" stroke-width="1.15"/><path d="M294.5 415.5L294.5 442.70000000000005" stroke="#262626" stroke-width="1.15"/><path d="M311.5 415.5L311.5 442.70000000000005" stroke="#262626" stroke-width="1.15"/><path d="M328.5 415.5L328.5 442.70000000000005" stroke="#262626" stroke-width="1.15"/><path d="M345.5 415.5L345.5 442.70000000000005" stroke="#262626" stroke-width="1.15"/><path d="M362.5 415.5L362.5 442.70000000000005" stroke="#262626" stroke-width="1.15"/><path d="M379.5 415.5L379.5 442.70000000000005" stroke="#262626" stroke-width="1.15"/><path d="M396.5 415.5L396.5 442.70000000000005" stroke="#262626" stroke-width="1.15"/><path d="M413.5 415.5L413.5 442.70000000000005" stroke="#262626" stroke-width="1.15"/><path d="M429.5 415.5L429.5 442.70000000000005" stroke="#262626" stroke-width="1.15"/><path d="M446.5 415.5L446.5 442.70000000000005" stroke="#262626" stroke-width="1.15"/><path d="M463.5 415.5L463.5 442.70000000000005" stroke="#262626" stroke-width="1.15"/><path d="M480.5 415.5L480.5 442.70000000000005" stroke="#262626" stroke-width="1.15"/><path d="M497.5 415.5L497.5 442.70000000000005" stroke="#262626" stroke-width="1.15"/><path d="M514.5 415.5L514.5 442.70000000000005" stroke="#262626" stroke-width="1.15"/><path d="M531.5 415.5L531.5 442.70000000000005" stroke="#262626" stroke-width="1.15"/><path d="M548.5 415.5L548.5 442.70000000000005" stroke="#262626" stroke-width="1.15"/><path d="M15.5 419.5L17.5 418.20000000000005H33.5V420.5H18V436.5L15.5 437.5z" fill="#9a9a9a"/><rect x="18" y="420.5" width="15.8" height="18.5" fill="#fff" stroke="#333" stroke-width="1"/><text x="26" y="433.29999999999995" font-size="9.5" fill="#111" font-weight="normal" text-anchor="middle" font-family="Liberation Sans">29</text><text x="38" y="426.0" font-size="8.3" fill="#222" font-weight="normal" text-anchor="start" font-family="Liberation Sans">Lamp setting signal</text><text x="38" y="439.5" font-size="8.2" fill="#222" font-weight="normal" text-anchor="start" font-family="Liberation Sans">01_ABL01_RU~_LEU02_LAM01_ST~01</text><text x="270.5" y="432.0" font-size="6.8" fill="#222" font-weight="normal" text-anchor="middle" font-family="Liberation Sans">Kommunikativ</text><text x="370.18499999999995" y="432.5" font-size="8.5" fill="#111" font-weight="bold" text-anchor="middle" font-family="Liberation Serif">1</text><path d="M34.200000000000045 469.70000000000005L556 469.70000000000005" stroke="#1e1e1e" stroke-width="1.3"/><path d="M34.200000000000045 442.70000000000005L34.200000000000045 469.70000000000005" stroke="#1e1e1e" stroke-width="1.3"/><path d="M247.5 442.70000000000005L247.5 469.70000000000005" stroke="#262626" stroke-width="1.15"/><path d="M294.5 442.70000000000005L294.5 469.70000000000005" stroke="#262626" stroke-width="1.15"/><path d="M311.5 442.70000000000005L311.5 469.70000000000005" stroke="#262626" stroke-width="1.15"/><path d="M328.5 442.70000000000005L328.5 469.70000000000005" stroke="#262626" stroke-width="1.15"/><path d="M345.5 442.70000000000005L345.5 469.70000000000005" stroke="#262626" stroke-width="1.15"/><path d="M362.5 442.70000000000005L362.5 469.70000000000005" stroke="#262626" stroke-width="1.15"/><path d="M379.5 442.70000000000005L379.5 469.70000000000005" stroke="#262626" stroke-width="1.15"/><path d="M396.5 442.70000000000005L396.5 469.70000000000005" stroke="#262626" stroke-width="1.15"/><path d="M413.5 442.70000000000005L413.5 469.70000000000005" stroke="#262626" stroke-width="1.15"/><path d="M429.5 442.70000000000005L429.5 469.70000000000005" stroke="#262626" stroke-width="1.15"/><path d="M446.5 442.70000000000005L446.5 469.70000000000005" stroke="#262626" stroke-width="1.15"/><path d="M463.5 442.70000000000005L463.5 469.70000000000005" stroke="#262626" stroke-width="1.15"/><path d="M480.5 442.70000000000005L480.5 469.70000000000005" stroke="#262626" stroke-width="1.15"/><path d="M497.5 442.70000000000005L497.5 469.70000000000005" stroke="#262626" stroke-width="1.15"/><path d="M514.5 442.70000000000005L514.5 469.70000000000005" stroke="#262626" stroke-width="1.15"/><path d="M531.5 442.70000000000005L531.5 469.70000000000005" stroke="#262626" stroke-width="1.15"/><path d="M548.5 442.70000000000005L548.5 469.70000000000005" stroke="#262626" stroke-width="1.15"/><path d="M15.5 446.70000000000005L17.5 445.4000000000001H33.5V447.70000000000005H18V463.70000000000005L15.5 464.70000000000005z" fill="#9a9a9a"/><rect x="18" y="447.70000000000005" width="15.8" height="18.5" fill="#fff" stroke="#333" stroke-width="1"/><text x="26" y="460.5" font-size="9.5" fill="#111" font-weight="normal" text-anchor="middle" font-family="Liberation Sans">30</text><text x="38" y="453.20000000000005" font-size="8.3" fill="#222" font-weight="normal" text-anchor="start" font-family="Liberation Sans">Lamp setting signal data recording</text><text x="38" y="466.70000000000005" font-size="8.2" fill="#222" font-weight="normal" text-anchor="start" font-family="Liberation Sans">01_ABL01_RU~_LEU02_LAM01_ST~01_TL</text><text x="270.5" y="459.20000000000005" font-size="7.5" fill="#222" font-weight="normal" text-anchor="middle" font-family="Liberation Sans">Virtuell</text><text x="454.83500000000004" y="459.70000000000005" font-size="8.5" fill="#111" font-weight="bold" text-anchor="middle" font-family="Liberation Serif">1</text><path d="M34.200000000000045 496.5L556 496.5" stroke="#1e1e1e" stroke-width="1.3"/><path d="M34.200000000000045 469.70000000000005L34.200000000000045 496.5" stroke="#1e1e1e" stroke-width="1.3"/><path d="M247.5 469.70000000000005L247.5 496.5" stroke="#262626" stroke-width="1.15"/><path d="M294.5 469.70000000000005L294.5 496.5" stroke="#262626" stroke-width="1.15"/><path d="M311.5 469.70000000000005L311.5 496.5" stroke="#262626" stroke-width="1.15"/><path d="M328.5 469.70000000000005L328.5 496.5" stroke="#262626" stroke-width="1.15"/><path d="M345.5 469.70000000000005L345.5 496.5" stroke="#262626" stroke-width="1.15"/><path d="M362.5 469.70000000000005L362.5 496.5" stroke="#262626" stroke-width="1.15"/><path d="M379.5 469.70000000000005L379.5 496.5" stroke="#262626" stroke-width="1.15"/><path d="M396.5 469.70000000000005L396.5 496.5" stroke="#262626" stroke-width="1.15"/><path d="M413.5 469.70000000000005L413.5 496.5" stroke="#262626" stroke-width="1.15"/><path d="M429.5 469.70000000000005L429.5 496.5" stroke="#262626" stroke-width="1.15"/><path d="M446.5 469.70000000000005L446.5 496.5" stroke="#262626" stroke-width="1.15"/><path d="M463.5 469.70000000000005L463.5 496.5" stroke="#262626" stroke-width="1.15"/><path d="M480.5 469.70000000000005L480.5 496.5" stroke="#262626" stroke-width="1.15"/><path d="M497.5 469.70000000000005L497.5 496.5" stroke="#262626" stroke-width="1.15"/><path d="M514.5 469.70000000000005L514.5 496.5" stroke="#262626" stroke-width="1.15"/><path d="M531.5 469.70000000000005L531.5 496.5" stroke="#262626" stroke-width="1.15"/><path d="M548.5 469.70000000000005L548.5 496.5" stroke="#262626" stroke-width="1.15"/><path d="M15.5 473.70000000000005L17.5 472.4000000000001H33.5V474.70000000000005H18V490.70000000000005L15.5 491.70000000000005z" fill="#9a9a9a"/><rect x="18" y="474.70000000000005" width="15.8" height="18.5" fill="#fff" stroke="#333" stroke-width="1"/><text x="26" y="487.5" font-size="9.5" fill="#111" font-weight="normal" text-anchor="middle" font-family="Liberation Sans">31</text><text x="38" y="480.20000000000005" font-size="8.3" fill="#222" font-weight="normal" text-anchor="start" font-family="Liberation Sans">Structured view, lamp</text><text x="38" y="493.70000000000005" font-size="8.2" fill="#222" font-weight="normal" text-anchor="start" font-family="Liberation Sans">01_ABL01_RU~_LEU02_LAM01_SV~01</text><text x="270.5" y="486.20000000000005" font-size="7.5" fill="#222" font-weight="normal" text-anchor="middle" font-family="Liberation Sans">Virtuell</text><text x="471.7649999999999" y="486.70000000000005" font-size="8.5" fill="#111" font-weight="bold" text-anchor="middle" font-family="Liberation Serif">1</text><path d="M34.200000000000045 496.5H264L277 510.0L264 523.5H34.200000000000045z" fill="#dcdcdc" stroke="#444" stroke-width="1.2"/><text x="38" y="506.79999999999995" font-size="8.8" fill="#111" font-weight="bold" text-anchor="start" font-family="Liberation Sans" textLength="113" lengthAdjust="spacingAndGlyphs">Room control unit | RBG01</text><text x="38" y="519.5" font-size="8.2" fill="#222" font-weight="normal" text-anchor="start" font-family="Liberation Sans">480_RAR01_01_ABL01_RU~_RBG01</text><path d="M34.200000000000045 523.5L556 523.5" stroke="#222" stroke-width="1.6"/><path d="M34.200000000000045 550.5L556 550.5" stroke="#1e1e1e" stroke-width="1.3"/><path d="M34.200000000000045 523.5L34.200000000000045 550.5" stroke="#1e1e1e" stroke-width="1.3"/><path d="M247.5 523.5L247.5 550.5" stroke="#262626" stroke-width="1.15"/><path d="M294.5 523.5L294.5 550.5" stroke="#262626" stroke-width="1.15"/><path d="M311.5 523.5L311.5 550.5" stroke="#262626" stroke-width="1.15"/><path d="M328.5 523.5L328.5 550.5" stroke="#262626" stroke-width="1.15"/><path d="M345.5 523.5L345.5 550.5" stroke="#262626" stroke-width="1.15"/><path d="M362.5 523.5L362.5 550.5" stroke="#262626" stroke-width="1.15"/><path d="M379.5 523.5L379.5 550.5" stroke="#262626" stroke-width="1.15"/><path d="M396.5 523.5L396.5 550.5" stroke="#262626" stroke-width="1.15"/><path d="M413.5 523.5L413.5 550.5" stroke="#262626" stroke-width="1.15"/><path d="M429.5 523.5L429.5 550.5" stroke="#262626" stroke-width="1.15"/><path d="M446.5 523.5L446.5 550.5" stroke="#262626" stroke-width="1.15"/><path d="M463.5 523.5L463.5 550.5" stroke="#262626" stroke-width="1.15"/><path d="M480.5 523.5L480.5 550.5" stroke="#262626" stroke-width="1.15"/><path d="M497.5 523.5L497.5 550.5" stroke="#262626" stroke-width="1.15"/><path d="M514.5 523.5L514.5 550.5" stroke="#262626" stroke-width="1.15"/><path d="M531.5 523.5L531.5 550.5" stroke="#262626" stroke-width="1.15"/><path d="M548.5 523.5L548.5 550.5" stroke="#262626" stroke-width="1.15"/><path d="M15.5 527.5L17.5 526.2H33.5V528.5H18V544.5L15.5 545.5z" fill="#9a9a9a"/><rect x="18" y="528.5" width="15.8" height="18.5" fill="#fff" stroke="#333" stroke-width="1"/><text x="26" y="541.3" font-size="9.5" fill="#111" font-weight="normal" text-anchor="middle" font-family="Liberation Sans">32</text><text x="38" y="534.0" font-size="8.3" fill="#222" font-weight="normal" text-anchor="start" font-family="Liberation Sans">Structured view</text><text x="38" y="547.5" font-size="8.2" fill="#222" font-weight="normal" text-anchor="start" font-family="Liberation Sans">01_ABL01_RU~_RBG01_#####_SV~01</text><text x="270.5" y="540.0" font-size="7.5" fill="#222" font-weight="normal" text-anchor="middle" font-family="Liberation Sans">Virtuell</text><text x="471.7649999999999" y="540.5" font-size="8.5" fill="#111" font-weight="bold" text-anchor="middle" font-family="Liberation Serif">1</text><path d="M34.200000000000045 577L556 577" stroke="#1e1e1e" stroke-width="1.3"/><path d="M34.200000000000045 550.5L34.200000000000045 577" stroke="#1e1e1e" stroke-width="1.3"/><path d="M247.5 550.5L247.5 577" stroke="#262626" stroke-width="1.15"/><path d="M294.5 550.5L294.5 577" stroke="#262626" stroke-width="1.15"/><path d="M311.5 550.5L311.5 577" stroke="#262626" stroke-width="1.15"/><path d="M328.5 550.5L328.5 577" stroke="#262626" stroke-width="1.15"/><path d="M345.5 550.5L345.5 577" stroke="#262626" stroke-width="1.15"/><path d="M362.5 550.5L362.5 577" stroke="#262626" stroke-width="1.15"/><path d="M379.5 550.5L379.5 577" stroke="#262626" stroke-width="1.15"/><path d="M396.5 550.5L396.5 577" stroke="#262626" stroke-width="1.15"/><path d="M413.5 550.5L413.5 577" stroke="#262626" stroke-width="1.15"/><path d="M429.5 550.5L429.5 577" stroke="#262626" stroke-width="1.15"/><path d="M446.5 550.5L446.5 577" stroke="#262626" stroke-width="1.15"/><path d="M463.5 550.5L463.5 577" stroke="#262626" stroke-width="1.15"/><path d="M480.5 550.5L480.5 577" stroke="#262626" stroke-width="1.15"/><path d="M497.5 550.5L497.5 577" stroke="#262626" stroke-width="1.15"/><path d="M514.5 550.5L514.5 577" stroke="#262626" stroke-width="1.15"/><path d="M531.5 550.5L531.5 577" stroke="#262626" stroke-width="1.15"/><path d="M548.5 550.5L548.5 577" stroke="#262626" stroke-width="1.15"/><path d="M15.5 554.5L17.5 553.2H33.5V555.5H18V571.5L15.5 572.5z" fill="#9a9a9a"/><rect x="18" y="555.5" width="15.8" height="18.5" fill="#fff" stroke="#333" stroke-width="1"/><text x="26" y="568.3" font-size="9.5" fill="#111" font-weight="normal" text-anchor="middle" font-family="Liberation Sans">33</text><text x="38" y="561.0" font-size="8.3" fill="#222" font-weight="normal" text-anchor="start" font-family="Liberation Sans">Setting value, ...</text><text x="38" y="574.5" font-size="8.2" fill="#222" font-weight="normal" text-anchor="start" font-family="Liberation Sans"></text><text x="270.5" y="567.0" font-size="7.5" fill="#222" font-weight="normal" text-anchor="middle" font-family="Liberation Sans">Virtuell</text><text x="1978.5349999999999" y="567.5" font-size="8.5" fill="#111" font-weight="bold" text-anchor="middle" font-family="Liberation Serif">1</text><rect x="36.5" y="362.3" width="78.5" height="11.3" fill="none" stroke="#4aa0d8" stroke-width="1"/><rect x="35.5" y="369.3" width="4.3" height="4.3" fill="#fff" stroke="#e00" stroke-width="1.3"/></svg>
<div class="a" style="left:683px;top:686px;width:575px;height:17px;background:#3b3b3b;"></div>
<div class="a t" style="left:690px;top:690.26px;font-size:7.7px;color:#d8d8d8;">X: 9,61 mm Y: 130,75 mm</div>
<svg class="a" style="left:1009px;top:687px;" width="14" height="14" viewBox="0 0 14 14"><path d="M2 11h10v2H2z" fill="none" stroke="#1e9be6" stroke-width="1"/><path d="M4 10l7-7" stroke="#ddd" stroke-width="1.2"/></svg>
<svg class="a" style="left:1025px;top:687px;" width="12" height="14" viewBox="0 0 12 14"><path d="M3 12V6a3 3 0 0 1 6 0v6" fill="none" stroke="#eee" stroke-width="2"/><rect x="2" y="11" width="2" height="2" fill="#1e9be6"/></svg>
<div class="a" style="left:1039px;top:687px;width:16px;height:15px;background:#2a2a2a;"></div>
<svg class="a" style="left:1040px;top:687px;" width="14" height="14" viewBox="0 0 14 14"><path d="M3 12V6a3 3 0 0 1 6 0v6" fill="none" stroke="#eee" stroke-width="2"/><path d="M12 4v9" stroke="#aaa" stroke-width="1" stroke-dasharray="1 1"/></svg>
<svg class="a" style="left:1057px;top:687px;" width="14" height="14" viewBox="0 0 14 14"><circle cx="7" cy="7" r="3" fill="none" stroke="#1e9be6" stroke-width="1.4"/><path d="M7 1v3 M7 10v3 M1 7h3 M10 7h3" stroke="#1e9be6" stroke-width="1.2"/></svg>
<svg class="a" style="left:1075px;top:688px;" width="10" height="12" viewBox="0 0 10 12"><path d="M1 1h1M4 1h1M7 1h1M1 4h1M4 4h1M7 4h1M1 7h1M4 7h1M7 7h1" stroke="#ddd" stroke-width="1.2"/></svg>
<div class="a" style="left:1085px;top:694px;width:4px;height:1px;background:#666;"></div>
<div class="a t" style="left:1107px;top:690.26px;font-size:7.7px;color:#d8d8d8;">Grid A: 1,00 mm</div>
<div class="a t" style="left:1176px;top:690.26px;font-size:7.7px;color:#d8d8d8;">Graphic 1:1</div>
<svg class="a" style="left:1229px;top:687px;" width="12" height="13" viewBox="0 0 12 13"><circle cx="5" cy="5" r="3.5" fill="none" stroke="#ddd" stroke-width="1.1"/><path d="M7.5 7.5l3.5 4" stroke="#ddd" stroke-width="1.3"/><rect x="2" y="9" width="3" height="3" fill="none" stroke="#1e9be6" stroke-width="0.9"/></svg>
<svg class="a" style="left:1245px;top:687px;" width="12" height="13" viewBox="0 0 12 13"><circle cx="5" cy="5" r="3.5" fill="none" stroke="#ddd" stroke-width="1.1"/><path d="M7.5 7.5l3.5 4" stroke="#ddd" stroke-width="1.3"/><path d="M3 10h3" stroke="#1e9be6" stroke-width="1"/></svg>
<div class="a" style="left:1237px;top:126px;width:21px;height:560px;background:#333333;"></div>
<div class="a t" style="left:1238px;top:131px;width:14px;height:68px;font-size:8px;color:#e0e0e0;writing-mode:vertical-rl;line-height:14px">Insert center (IEC)</div>
<div class="a" style="left:1252px;top:131px;width:4px;height:67px;background:#3d3d3d;"></div>
<div class="a" style="left:1257.5px;top:110px;width:22.5px;height:593.7px;background:#333333;"></div>
<div class="a t" style="left:1260px;top:112px;width:14px;height:70px;font-size:8px;color:#e0e0e0;writing-mode:vertical-rl;line-height:14px">Property overview</div>
<div class="a" style="left:1276px;top:112px;width:4px;height:66px;background:#3d3d3d;"></div>
<div class="a" style="left:1258px;top:703px;width:22px;height:17px;background:#474747;"></div>
<div class="a t" style="left:1241px;top:707.15px;font-size:7px;color:#ccc;">#</div>
<svg class="a" style="left:1264px;top:704px;" width="14" height="14" viewBox="0 0 14 14"><path d="M1 6v7h12V6 M7 1v8 M4 6l3 3 3-3" fill="none" stroke="#ddd" stroke-width="1.1"/></svg>
</body></html>
